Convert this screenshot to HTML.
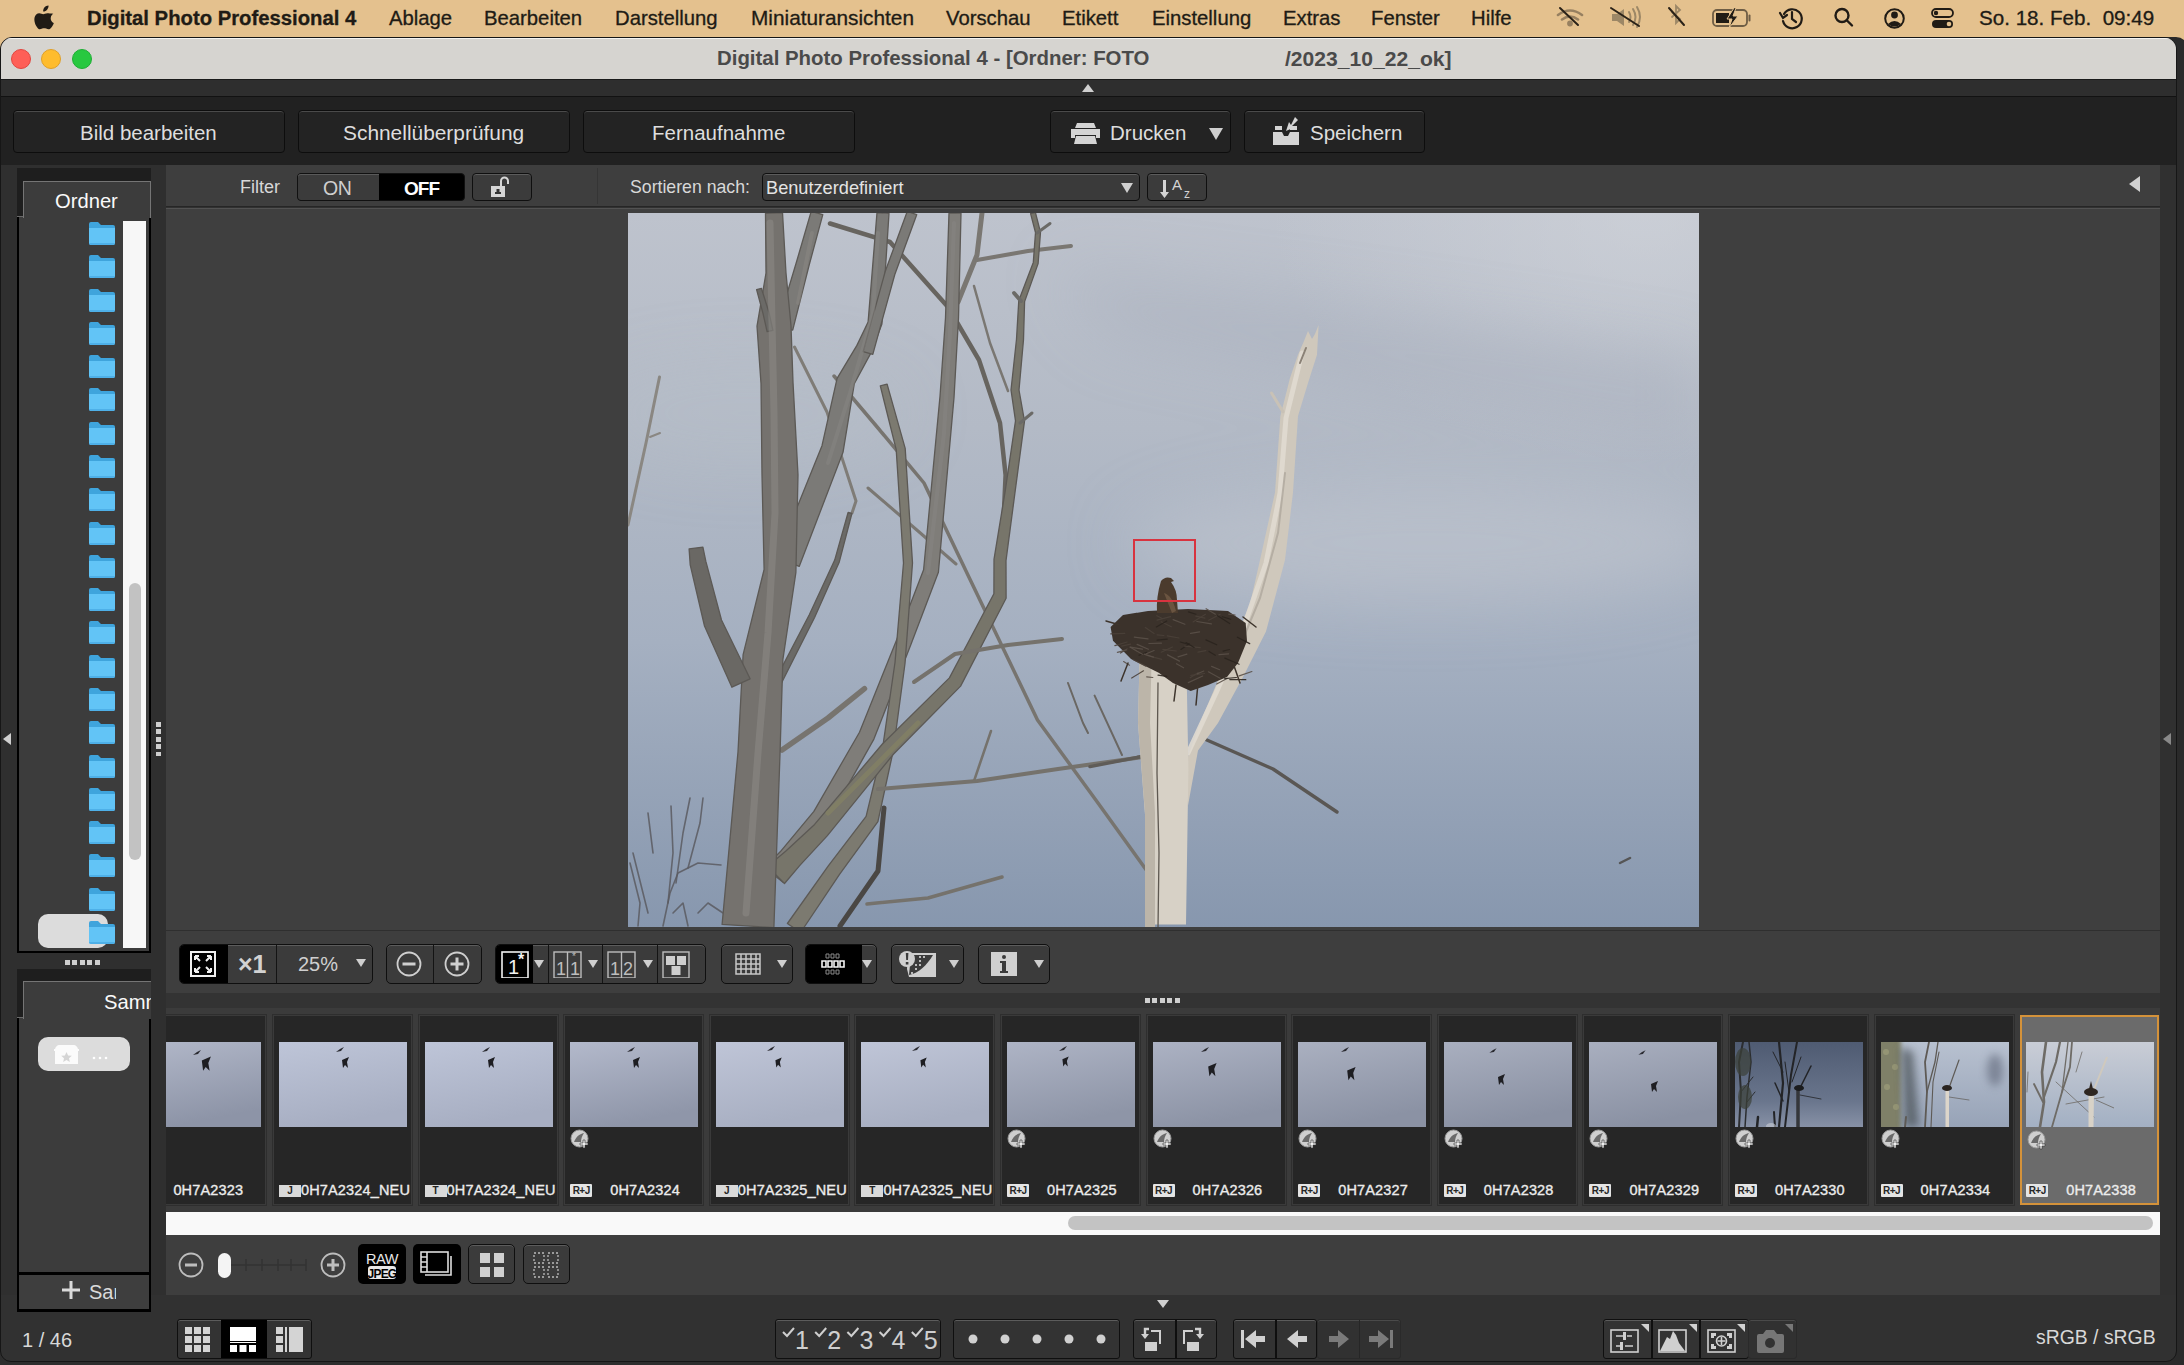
<!DOCTYPE html>
<html><head><meta charset="utf-8">
<style>
*{box-sizing:border-box;margin:0;padding:0}
html,body{width:2184px;height:1365px;overflow:hidden;background:#2e2e2e;font-family:"Liberation Sans",sans-serif;position:relative}
.a{position:absolute}
.t{position:absolute;white-space:nowrap;line-height:1}
.mi{position:absolute;top:8px;font-size:20.3px;color:#201b15;white-space:nowrap;line-height:1;-webkit-text-stroke:0.3px #201b15}
.btn{position:absolute;background:#232323;border:1px solid #0d0d0d;border-radius:4px;box-shadow:inset 0 1px 0 #4a4a4a;color:#dedede;font-size:20.5px;line-height:1;white-space:nowrap}
.tb{position:absolute;background:#3b3b3b;border:1px solid #0f0f0f;border-radius:5px;box-shadow:inset 0 1px 0 #5c5c5c;overflow:hidden}
.blk{position:absolute;top:0;bottom:0;background:#000}
.vs{position:absolute;top:0;bottom:0;width:1px;background:#141414}
.tri{position:absolute;width:0;height:0;border-left:6px solid transparent;border-right:6px solid transparent;border-top:9px solid #cfcfcf}
.folder{position:absolute;left:88px;width:28px;height:25px}
.thumb{position:absolute;top:1015px;width:139px;height:190px;background:#262626;border:1px solid #3a3a3a;box-shadow:0 0 0 1px #2e2e2e}
.thumb .ph{position:absolute;left:5px;top:26px;width:128px;height:85px;overflow:hidden}
.thumb .nm{position:absolute;top:167px;letter-spacing:0.15px;font-size:14.5px;color:#ececec;-webkit-text-stroke:0.35px #ececec;white-space:nowrap;line-height:1}
.badge{position:absolute;top:169px;left:5px;height:12px;background:#d9d9d9;color:#222;font-size:10px;font-weight:bold;line-height:12px;text-align:center}
.rj{position:absolute;top:168px;left:5px;width:22px;height:13px;background:#e4e4e4;border-radius:1px;color:#262626;font-size:10px;font-weight:bold;line-height:13px;text-align:center;letter-spacing:-0.5px}
.gl{position:absolute;top:113px;left:5px;width:20px;height:20px}
</style></head><body>
<!-- MENU BAR -->
<div class="a" style="left:0;top:0;width:2184px;height:38px;background:#e4c18e"></div>
<svg class="a" style="left:33px;top:5px" width="22" height="26" viewBox="0 0 22 26"><path fill="#201b15" d="M15.5 0.5c.2 1.6-.5 3.2-1.4 4.2-1 1.1-2.4 1.900-3.900 1.800-.2-1.600.5-3.200 1.400-4.200C12.600 1.200 14.200.4 15.500.5zM20.300 8.800c-.2.1-2.600 1.500-2.600 4.500 0 3.500 3.100 4.700 3.100 4.700s-1.100 4.300-4 5.900c-1.200.7-2.400.1-3.700-.4-1.300-.5-2.600-.5-3.900 0-1.300.5-2.400 1.100-3.600.4C3 21.900.8 17 1.500 12.800 2 10.200 4 8.300 6.300 8.300c1.600 0 2.700 1 3.900 1s2.200-1 4.200-1c.8 0 3.800.3 5.900.5z"/></svg>
<div class="mi" style="left:87px;font-weight:bold">Digital Photo Professional 4</div>
<div class="mi" style="left:389px">Ablage</div>
<div class="mi" style="left:484px">Bearbeiten</div>
<div class="mi" style="left:615px">Darstellung</div>
<div class="mi" style="left:751px;font-size:20.8px">Miniaturansichten</div>
<div class="mi" style="left:946px">Vorschau</div>
<div class="mi" style="left:1062px">Etikett</div>
<div class="mi" style="left:1152px">Einstellung</div>
<div class="mi" style="left:1283px">Extras</div>
<div class="mi" style="left:1371px">Fenster</div>
<div class="mi" style="left:1471px">Hilfe</div>
<div class="mi" style="left:1979px;font-size:20.6px">So. 18. Feb.&nbsp; 09:49</div>
<!-- status icons -->
<svg class="a" style="left:1540px;top:0" width="440" height="38" viewBox="1540 0 440 38" fill="none" stroke-linecap="round">
  <g stroke="#8f7a5c" stroke-width="2.6" opacity="0.9"><path d="M1558,15 q12,-9 24,0 M1562,19.5 q8,-6 16,0"/><circle cx="1570" cy="23.5" r="1.6" fill="#8f7a5c"/></g>
  <path d="M1560,8 L1578,25" stroke="#2a2218" stroke-width="2"/>
  <g fill="#9c8766" stroke="none"><path d="M1612,14 h5 l7,-5 v17 l-7,-5 h-5z"/></g><g stroke="#9c8766" stroke-width="2"><path d="M1629,12 q3,5 0,10 M1633,9 q5,8 0,16 M1637,7 q6,10 0,20"/></g>
  <path d="M1611,8 L1639,26" stroke="#2a2218" stroke-width="2"/>
  <path d="M1672,12 l8,7 -4,4 v-17 l4,4 -8,7" stroke="#9c8766" stroke-width="1.8"/>
  <path d="M1669,8 L1684,25" stroke="#2a2218" stroke-width="2"/>
  <rect x="1713" y="10" width="34" height="16" rx="4" stroke="#6e5d45" stroke-width="1.8"/><path d="M1749.5,15.5v5" stroke="#6e5d45" stroke-width="2"/>
  <path d="M1716,13 h13 v10 h-13z" fill="#201b15" stroke="none"/><path d="M1734,8 l-7,11 h5 l-3,9 9,-12 h-5 l3,-8z" fill="#201b15" stroke="#e4c18e" stroke-width="1"/>
  <g stroke="#201b15" stroke-width="2.2"><path d="M1783,21 a9.5,9.5 0 1 0 1,-7"/><path d="M1780,13 l3,5 4,-3" /><path d="M1792,12v7l4,3"/></g>
  <g stroke="#201b15" stroke-width="2.4"><circle cx="1842" cy="15.5" r="6.5"/><path d="M1847,20.5l5,5"/></g>
  <g stroke="#201b15" stroke-width="2"><circle cx="1894.5" cy="18.5" r="9.3"/></g><circle cx="1894.5" cy="15" r="3.4" fill="#201b15"/><path d="M1888,24 q6.5,-6 13,0 q-6.5,5 -13,0z" fill="#201b15"/>
  <rect x="1932" y="9" width="21" height="8" rx="4" stroke="#201b15" stroke-width="1.8"/><circle cx="1936" cy="13" r="2.2" fill="#201b15"/>
  <rect x="1932" y="20" width="21" height="8" rx="4" fill="#201b15"/><circle cx="1949" cy="24" r="2.3" fill="#e4c18e"/>
</svg>

<!-- WINDOW FRAME -->
<div class="a" style="left:0;top:36px;width:2184px;height:16px;background:#e4c18e"></div>
<div class="a" style="left:2070px;top:37px;width:118px;height:1400px;background:#2a2a2a;border-radius:12px"></div>
<div class="a" style="left:0;top:37px;width:2177px;height:1325px;background:#313131;border-radius:12px 12px 11px 11px;border:1px solid #161616;overflow:hidden">
  <div class="a" style="left:0;top:0;width:2176px;height:42px;background:#d6d4d0;border-top:1px solid #f4f3f1"></div>
</div>
<div class="a" style="left:11px;top:49px;width:20px;height:20px;border-radius:50%;background:#fe5f57;border:1px solid #e2463f"></div>
<div class="a" style="left:41px;top:49px;width:20px;height:20px;border-radius:50%;background:#febc2e;border:1px solid #e0a028"></div>
<div class="a" style="left:72px;top:49px;width:20px;height:20px;border-radius:50%;background:#28c840;border:1px solid #1eae34"></div>
<div class="t" style="left:717px;top:48px;font-size:20.4px;font-weight:bold;color:#4a4a4a">Digital Photo Professional 4 - [Ordner: FOTO</div>
<div class="t" style="left:1285px;top:48px;font-size:21.1px;font-weight:bold;color:#4a4a4a">/2023_10_22_ok]</div>
<!-- strip -->
<div class="a" style="left:1px;top:79px;width:2175px;height:18px;background:#2e2e2e;border-top:1px solid #1a1a1a;border-bottom:1px solid #121212"></div>
<div class="a" style="left:1082px;top:84px;width:0;height:0;border-left:6px solid transparent;border-right:6px solid transparent;border-bottom:8px solid #d0d0d0"></div>
<!-- toolbar -->
<div class="a" style="left:1px;top:97px;width:2175px;height:68px;background:#212121"></div>
<div class="btn" style="left:13px;top:110px;width:272px;height:43px"><span class="t" style="left:66px;top:12px">Bild bearbeiten</span></div>
<div class="btn" style="left:298px;top:110px;width:272px;height:43px"><span class="t" style="left:44px;top:12px;font-size:20.9px">Schnellüberprüfung</span></div>
<div class="btn" style="left:583px;top:110px;width:272px;height:43px"><span class="t" style="left:68px;top:12px">Fernaufnahme</span></div>
<div class="btn" style="left:1050px;top:110px;width:181px;height:43px">
  <svg class="a" style="left:20px;top:12px" width="29" height="21" viewBox="0 0 29 21"><path fill="#d4d4d4" d="M6 0h17l2 5H4z M0 6h29v9h-4v-3H4v3H0z M5 13h19l2 8H3z"/></svg>
  <span class="t" style="left:59px;top:12px">Drucken</span>
  <div class="tri" style="left:158px;top:17px;border-left-width:7.5px;border-right-width:7.5px;border-top-width:12px"></div>
</div>
<div class="btn" style="left:1244px;top:110px;width:181px;height:43px">
  <svg class="a" style="left:28px;top:6px" width="26" height="28" viewBox="0 0 26 28"><path fill="#d4d4d4" d="M0 15h9l2 4h4l2-4h9v13H0z M2 9h7v4H2z M17 9h7v4h-7z"/><path fill="#d4d4d4" d="M22 0l3 3-6 6 3 1-9 4 3-9 2 3z"/></svg>
  <span class="t" style="left:65px;top:12px">Speichern</span>
</div>
<!-- LEFT COLUMN -->
<div class="a" style="left:1px;top:165px;width:165px;height:1130px;background:#2f2f2f"></div>
<div class="a" style="left:3px;top:733px;width:0;height:0;border-top:6.5px solid transparent;border-bottom:6.5px solid transparent;border-right:8px solid #d0d0d0"></div>
<!-- Ordner panel -->
<div class="a" style="left:17px;top:168px;width:134px;height:13px;background:#1e1e1e"></div>
<div class="a" style="left:17px;top:181px;width:134px;height:772px;background:#000"></div>
<div class="a" style="left:19px;top:217px;width:130px;height:734px;background:#3c3c3c"></div>
<div class="a" style="left:17px;top:181px;width:6px;height:36px;background:#1e1e1e;border-bottom:1px solid #6a6a6a"></div>
<div class="a" style="left:23px;top:181px;width:128px;height:37px;background:#3c3c3c;border:1px solid #757575;border-bottom:none"></div>
<div class="t" style="left:55px;top:191px;font-size:20.2px;color:#fafafa">Ordner</div>
<div class="a" style="left:123px;top:221px;width:23px;height:727px;background:#f7f7f7"></div>
<div class="a" style="left:129px;top:583px;width:12px;height:277px;background:#c2c2c2;border-radius:6px"></div>
<div class="a" style="left:38px;top:914px;width:70px;height:34px;background:#dcdcdc;border-radius:10px"></div>
<svg class="folder" style="top:221.0px" viewBox="0 0 28 25"><path fill="#3fa4dc" d="M1 3a2 2 0 0 1 2-2h7l3 3h12a2 2 0 0 1 2 2v2H1z"/><path fill="#62c4f6" d="M1 7h26v15a2 2 0 0 1-2 2H3a2 2 0 0 1-2-2z"/><path fill="#4eb0e8" d="M1 22h26v0a2 2 0 0 1-2 2H3a2 2 0 0 1-2-2z"/></svg><svg class="folder" style="top:254.3px" viewBox="0 0 28 25"><path fill="#3fa4dc" d="M1 3a2 2 0 0 1 2-2h7l3 3h12a2 2 0 0 1 2 2v2H1z"/><path fill="#62c4f6" d="M1 7h26v15a2 2 0 0 1-2 2H3a2 2 0 0 1-2-2z"/><path fill="#4eb0e8" d="M1 22h26v0a2 2 0 0 1-2 2H3a2 2 0 0 1-2-2z"/></svg><svg class="folder" style="top:287.6px" viewBox="0 0 28 25"><path fill="#3fa4dc" d="M1 3a2 2 0 0 1 2-2h7l3 3h12a2 2 0 0 1 2 2v2H1z"/><path fill="#62c4f6" d="M1 7h26v15a2 2 0 0 1-2 2H3a2 2 0 0 1-2-2z"/><path fill="#4eb0e8" d="M1 22h26v0a2 2 0 0 1-2 2H3a2 2 0 0 1-2-2z"/></svg><svg class="folder" style="top:320.8px" viewBox="0 0 28 25"><path fill="#3fa4dc" d="M1 3a2 2 0 0 1 2-2h7l3 3h12a2 2 0 0 1 2 2v2H1z"/><path fill="#62c4f6" d="M1 7h26v15a2 2 0 0 1-2 2H3a2 2 0 0 1-2-2z"/><path fill="#4eb0e8" d="M1 22h26v0a2 2 0 0 1-2 2H3a2 2 0 0 1-2-2z"/></svg><svg class="folder" style="top:354.1px" viewBox="0 0 28 25"><path fill="#3fa4dc" d="M1 3a2 2 0 0 1 2-2h7l3 3h12a2 2 0 0 1 2 2v2H1z"/><path fill="#62c4f6" d="M1 7h26v15a2 2 0 0 1-2 2H3a2 2 0 0 1-2-2z"/><path fill="#4eb0e8" d="M1 22h26v0a2 2 0 0 1-2 2H3a2 2 0 0 1-2-2z"/></svg><svg class="folder" style="top:387.4px" viewBox="0 0 28 25"><path fill="#3fa4dc" d="M1 3a2 2 0 0 1 2-2h7l3 3h12a2 2 0 0 1 2 2v2H1z"/><path fill="#62c4f6" d="M1 7h26v15a2 2 0 0 1-2 2H3a2 2 0 0 1-2-2z"/><path fill="#4eb0e8" d="M1 22h26v0a2 2 0 0 1-2 2H3a2 2 0 0 1-2-2z"/></svg><svg class="folder" style="top:420.7px" viewBox="0 0 28 25"><path fill="#3fa4dc" d="M1 3a2 2 0 0 1 2-2h7l3 3h12a2 2 0 0 1 2 2v2H1z"/><path fill="#62c4f6" d="M1 7h26v15a2 2 0 0 1-2 2H3a2 2 0 0 1-2-2z"/><path fill="#4eb0e8" d="M1 22h26v0a2 2 0 0 1-2 2H3a2 2 0 0 1-2-2z"/></svg><svg class="folder" style="top:454.0px" viewBox="0 0 28 25"><path fill="#3fa4dc" d="M1 3a2 2 0 0 1 2-2h7l3 3h12a2 2 0 0 1 2 2v2H1z"/><path fill="#62c4f6" d="M1 7h26v15a2 2 0 0 1-2 2H3a2 2 0 0 1-2-2z"/><path fill="#4eb0e8" d="M1 22h26v0a2 2 0 0 1-2 2H3a2 2 0 0 1-2-2z"/></svg><svg class="folder" style="top:487.2px" viewBox="0 0 28 25"><path fill="#3fa4dc" d="M1 3a2 2 0 0 1 2-2h7l3 3h12a2 2 0 0 1 2 2v2H1z"/><path fill="#62c4f6" d="M1 7h26v15a2 2 0 0 1-2 2H3a2 2 0 0 1-2-2z"/><path fill="#4eb0e8" d="M1 22h26v0a2 2 0 0 1-2 2H3a2 2 0 0 1-2-2z"/></svg><svg class="folder" style="top:520.5px" viewBox="0 0 28 25"><path fill="#3fa4dc" d="M1 3a2 2 0 0 1 2-2h7l3 3h12a2 2 0 0 1 2 2v2H1z"/><path fill="#62c4f6" d="M1 7h26v15a2 2 0 0 1-2 2H3a2 2 0 0 1-2-2z"/><path fill="#4eb0e8" d="M1 22h26v0a2 2 0 0 1-2 2H3a2 2 0 0 1-2-2z"/></svg><svg class="folder" style="top:553.8px" viewBox="0 0 28 25"><path fill="#3fa4dc" d="M1 3a2 2 0 0 1 2-2h7l3 3h12a2 2 0 0 1 2 2v2H1z"/><path fill="#62c4f6" d="M1 7h26v15a2 2 0 0 1-2 2H3a2 2 0 0 1-2-2z"/><path fill="#4eb0e8" d="M1 22h26v0a2 2 0 0 1-2 2H3a2 2 0 0 1-2-2z"/></svg><svg class="folder" style="top:587.1px" viewBox="0 0 28 25"><path fill="#3fa4dc" d="M1 3a2 2 0 0 1 2-2h7l3 3h12a2 2 0 0 1 2 2v2H1z"/><path fill="#62c4f6" d="M1 7h26v15a2 2 0 0 1-2 2H3a2 2 0 0 1-2-2z"/><path fill="#4eb0e8" d="M1 22h26v0a2 2 0 0 1-2 2H3a2 2 0 0 1-2-2z"/></svg><svg class="folder" style="top:620.4px" viewBox="0 0 28 25"><path fill="#3fa4dc" d="M1 3a2 2 0 0 1 2-2h7l3 3h12a2 2 0 0 1 2 2v2H1z"/><path fill="#62c4f6" d="M1 7h26v15a2 2 0 0 1-2 2H3a2 2 0 0 1-2-2z"/><path fill="#4eb0e8" d="M1 22h26v0a2 2 0 0 1-2 2H3a2 2 0 0 1-2-2z"/></svg><svg class="folder" style="top:653.6px" viewBox="0 0 28 25"><path fill="#3fa4dc" d="M1 3a2 2 0 0 1 2-2h7l3 3h12a2 2 0 0 1 2 2v2H1z"/><path fill="#62c4f6" d="M1 7h26v15a2 2 0 0 1-2 2H3a2 2 0 0 1-2-2z"/><path fill="#4eb0e8" d="M1 22h26v0a2 2 0 0 1-2 2H3a2 2 0 0 1-2-2z"/></svg><svg class="folder" style="top:686.9px" viewBox="0 0 28 25"><path fill="#3fa4dc" d="M1 3a2 2 0 0 1 2-2h7l3 3h12a2 2 0 0 1 2 2v2H1z"/><path fill="#62c4f6" d="M1 7h26v15a2 2 0 0 1-2 2H3a2 2 0 0 1-2-2z"/><path fill="#4eb0e8" d="M1 22h26v0a2 2 0 0 1-2 2H3a2 2 0 0 1-2-2z"/></svg><svg class="folder" style="top:720.2px" viewBox="0 0 28 25"><path fill="#3fa4dc" d="M1 3a2 2 0 0 1 2-2h7l3 3h12a2 2 0 0 1 2 2v2H1z"/><path fill="#62c4f6" d="M1 7h26v15a2 2 0 0 1-2 2H3a2 2 0 0 1-2-2z"/><path fill="#4eb0e8" d="M1 22h26v0a2 2 0 0 1-2 2H3a2 2 0 0 1-2-2z"/></svg><svg class="folder" style="top:753.5px" viewBox="0 0 28 25"><path fill="#3fa4dc" d="M1 3a2 2 0 0 1 2-2h7l3 3h12a2 2 0 0 1 2 2v2H1z"/><path fill="#62c4f6" d="M1 7h26v15a2 2 0 0 1-2 2H3a2 2 0 0 1-2-2z"/><path fill="#4eb0e8" d="M1 22h26v0a2 2 0 0 1-2 2H3a2 2 0 0 1-2-2z"/></svg><svg class="folder" style="top:786.8px" viewBox="0 0 28 25"><path fill="#3fa4dc" d="M1 3a2 2 0 0 1 2-2h7l3 3h12a2 2 0 0 1 2 2v2H1z"/><path fill="#62c4f6" d="M1 7h26v15a2 2 0 0 1-2 2H3a2 2 0 0 1-2-2z"/><path fill="#4eb0e8" d="M1 22h26v0a2 2 0 0 1-2 2H3a2 2 0 0 1-2-2z"/></svg><svg class="folder" style="top:820.0px" viewBox="0 0 28 25"><path fill="#3fa4dc" d="M1 3a2 2 0 0 1 2-2h7l3 3h12a2 2 0 0 1 2 2v2H1z"/><path fill="#62c4f6" d="M1 7h26v15a2 2 0 0 1-2 2H3a2 2 0 0 1-2-2z"/><path fill="#4eb0e8" d="M1 22h26v0a2 2 0 0 1-2 2H3a2 2 0 0 1-2-2z"/></svg><svg class="folder" style="top:853.3px" viewBox="0 0 28 25"><path fill="#3fa4dc" d="M1 3a2 2 0 0 1 2-2h7l3 3h12a2 2 0 0 1 2 2v2H1z"/><path fill="#62c4f6" d="M1 7h26v15a2 2 0 0 1-2 2H3a2 2 0 0 1-2-2z"/><path fill="#4eb0e8" d="M1 22h26v0a2 2 0 0 1-2 2H3a2 2 0 0 1-2-2z"/></svg><svg class="folder" style="top:886.6px" viewBox="0 0 28 25"><path fill="#3fa4dc" d="M1 3a2 2 0 0 1 2-2h7l3 3h12a2 2 0 0 1 2 2v2H1z"/><path fill="#62c4f6" d="M1 7h26v15a2 2 0 0 1-2 2H3a2 2 0 0 1-2-2z"/><path fill="#4eb0e8" d="M1 22h26v0a2 2 0 0 1-2 2H3a2 2 0 0 1-2-2z"/></svg><svg class="folder" style="top:919.9px" viewBox="0 0 28 25"><path fill="#3fa4dc" d="M1 3a2 2 0 0 1 2-2h7l3 3h12a2 2 0 0 1 2 2v2H1z"/><path fill="#62c4f6" d="M1 7h26v15a2 2 0 0 1-2 2H3a2 2 0 0 1-2-2z"/><path fill="#4eb0e8" d="M1 22h26v0a2 2 0 0 1-2 2H3a2 2 0 0 1-2-2z"/></svg>
<div class="a" style="left:65px;top:960px;width:36px;height:5px;background:repeating-linear-gradient(90deg,#cfcfcf 0 5px,transparent 5px 7.5px)"></div>
<div class="a" style="left:156px;top:722px;width:5px;height:34px;background:repeating-linear-gradient(180deg,#cfcfcf 0 5px,transparent 5px 7.5px)"></div>
<!-- Sammlung panel -->
<div class="a" style="left:17px;top:969px;width:134px;height:12px;background:#1e1e1e"></div>
<div class="a" style="left:17px;top:981px;width:134px;height:331px;background:#000"></div>
<div class="a" style="left:19px;top:1018px;width:130px;height:254px;background:#3c3c3c"></div>
<div class="a" style="left:17px;top:981px;width:6px;height:37px;background:#1e1e1e;border-bottom:1px solid #6a6a6a"></div>
<div class="a" style="left:23px;top:981px;width:128px;height:38px;background:#3c3c3c;border-top:1px solid #757575;border-left:1px solid #757575"></div>
<div class="a" style="left:23px;top:982px;width:128px;height:36px;overflow:hidden"><span class="t" style="left:81px;top:10px;font-size:20.2px;color:#fafafa">Sammlung</span></div>
<div class="a" style="left:38px;top:1037px;width:92px;height:34px;background:#dcdcdc;border-radius:10px"></div>
<svg class="a" style="left:53px;top:1043px" width="80" height="22" viewBox="0 0 80 22"><path fill="#fbfbfb" d="M2 7c0-3 2-5 5-5h13c3 0 5 2 5 5v14H2z"/><path fill="#fbfbfb" d="M1 6h25v2H1z"/><path fill="#d5d5d5" d="M13.5 9l1.6 3.4 3.7.4-2.8 2.5.8 3.7-3.3-1.9-3.3 1.9.8-3.7-2.8-2.5 3.7-.4z"/><circle cx="41" cy="15" r="1.3" fill="#fff"/><circle cx="47" cy="15" r="1.3" fill="#fff"/><circle cx="53" cy="15" r="1.3" fill="#fff"/></svg>
<div class="a" style="left:19px;top:1275px;width:130px;height:34px;background:#3e3e3e"></div>
<svg class="a" style="left:62px;top:1281px" width="18" height="18" viewBox="0 0 18 18"><path fill="#dadada" d="M7.5 0h3v7.5H18v3h-7.5V18h-3v-7.5H0v-3h7.5z"/></svg>
<div class="a" style="left:89px;top:1281px;width:27px;height:26px;overflow:hidden"><span class="t" style="left:0;top:1px;font-size:20px;color:#dadada">Sam</span></div>

<!-- CONTENT AREA -->
<div class="a" style="left:166px;top:165px;width:1994px;height:42px;background:#3e3e3e;border-bottom:1px solid #262626"></div>
<div class="t" style="left:240px;top:178px;font-size:18px;color:#d8d8d8">Filter</div>
<div class="a" style="left:297px;top:173px;width:168px;height:28px;background:#000;border-radius:4px;border:1px solid #111"></div>
<div class="a" style="left:298px;top:174px;width:81px;height:26px;background:#3b3b3b;border-radius:3px 0 0 3px;box-shadow:inset 0 1px 0 #5a5a5a"></div>
<div class="t" style="left:323px;top:179px;font-size:19.5px;color:#cfcfcf;letter-spacing:-0.5px">ON</div>
<div class="t" style="left:404px;top:179px;font-size:19px;font-weight:bold;color:#fff;letter-spacing:-1px">OFF</div>
<div class="tb" style="left:472px;top:173px;width:60px;height:28px;border-radius:4px"></div>
<svg class="a" style="left:490px;top:176px" width="22" height="22" viewBox="0 0 22 22"><path fill="none" stroke="#d6d6d6" stroke-width="2" d="M11 10V5a3.5 3.5 0 0 1 7 0v3"/><rect x="1" y="10" width="14" height="11" fill="#d6d6d6"/><rect x="6.5" y="13" width="3" height="3" fill="#333"/><rect x="5" y="16" width="6" height="2" fill="#333"/></svg>
<div class="a" style="left:597px;top:168px;width:1px;height:36px;background:#353535"></div>
<div class="t" style="left:630px;top:179px;font-size:17.7px;color:#d8d8d8">Sortieren nach:</div>
<div class="tb" style="left:762px;top:173px;width:378px;height:28px;border-radius:4px;background:#3a3a3a"></div>
<div class="t" style="left:766px;top:179px;font-size:18.2px;color:#e4e4e4">Benutzerdefiniert</div>
<div class="tri" style="left:1121px;top:183px;border-left-width:6px;border-right-width:6px;border-top-width:10px"></div>
<div class="tb" style="left:1147px;top:173px;width:60px;height:28px;border-radius:4px"></div>
<svg class="a" style="left:1158px;top:176px" width="40" height="24" viewBox="0 0 40 24"><path fill="#d4d4d4" d="M5 4h3v12h3l-4.5 6L2 16h3z"/><text x="14" y="14" font-family="Liberation Sans" font-size="15" fill="#d4d4d4">A</text><text x="26" y="22" font-family="Liberation Sans" font-size="12" fill="#d4d4d4">z</text></svg>
<div class="a" style="left:2129px;top:176px;width:0;height:0;border-top:8.5px solid transparent;border-bottom:8.5px solid transparent;border-right:11px solid #d0d0d0"></div>
<!-- viewer -->
<div class="a" style="left:166px;top:208px;width:1994px;height:722px;background:#3f3f3f;border-top:1px solid #525252"></div>
<div id="photo" class="a" style="left:628px;top:213px;width:1071px;height:714px;overflow:hidden;background:#aab3c2"><svg width="1071" height="715" viewBox="0 0 1071 715" style="position:absolute;left:0;top:0">
<defs>
<linearGradient id="sky" x1="0" y1="0" x2="0" y2="1">
<stop offset="0" stop-color="#bec3cd"/><stop offset="0.3" stop-color="#b3bac6"/><stop offset="0.6" stop-color="#a5b0c1"/><stop offset="1" stop-color="#8797ae"/></linearGradient>
<radialGradient id="cl" cx="0.95" cy="0.0" r="0.35"><stop offset="0" stop-color="#d3d6dc" stop-opacity="0.6"/><stop offset="1" stop-color="#d3d6dc" stop-opacity="0"/></radialGradient>
</defs>
<rect width="1071" height="715" fill="url(#sky)"/>
<rect width="1071" height="715" fill="url(#cl)"/>
<filter id="soft" x="-50%" y="-50%" width="200%" height="200%"><feGaussianBlur stdDeviation="30"/></filter>
<g filter="url(#soft)">
<path d="M430,60 Q700,90 1071,150 L1071,230 Q800,190 480,120 Z" fill="#a9b1be" opacity="0.55"/>
<ellipse cx="800" cy="330" rx="300" ry="60" fill="#bfc5ce" opacity="0.6"/>
<ellipse cx="120" cy="200" rx="160" ry="50" fill="#b7bec9" opacity="0.4"/>
</g>
<path d="M35.0,713.0 L42.0,680.0 L50.0,660.0 L70.0,650.0 L93.0,652.0" fill="none" stroke="#5a5a60" stroke-width="1.6" stroke-linecap="round" stroke-linejoin="round" opacity="0.85"/>
<path d="M40.0,690.0 L45.0,640.0 L43.0,593.0" fill="none" stroke="#5a5a60" stroke-width="1.6" stroke-linecap="round" stroke-linejoin="round" opacity="0.85"/>
<path d="M48.0,670.0 L55.0,620.0 L62.0,585.0" fill="none" stroke="#5a5a60" stroke-width="1.6" stroke-linecap="round" stroke-linejoin="round" opacity="0.85"/>
<path d="M60.0,655.0 L72.0,610.0 L75.0,585.0" fill="none" stroke="#5a5a60" stroke-width="1.6" stroke-linecap="round" stroke-linejoin="round" opacity="0.85"/>
<path d="M20.0,700.0 L10.0,660.0 L5.0,640.0" fill="none" stroke="#5a5a60" stroke-width="1.6" stroke-linecap="round" stroke-linejoin="round" opacity="0.85"/>
<path d="M10.0,713.0 L12.0,690.0 L2.0,650.0" fill="none" stroke="#5a5a60" stroke-width="1.6" stroke-linecap="round" stroke-linejoin="round" opacity="0.85"/>
<path d="M25.0,640.0 L20.0,600.0" fill="none" stroke="#5a5a60" stroke-width="1.6" stroke-linecap="round" stroke-linejoin="round" opacity="0.85"/>
<path d="M70.0,700.0 L80.0,690.0 L95.0,700.0" fill="none" stroke="#5a5a60" stroke-width="1.6" stroke-linecap="round" stroke-linejoin="round" opacity="0.85"/>
<path d="M45.0,700.0 L55.0,690.0 L60.0,713.0" fill="none" stroke="#5a5a60" stroke-width="1.6" stroke-linecap="round" stroke-linejoin="round" opacity="0.85"/>
<path d="M31.5,164.0 L18.0,230.0 L0.0,312.0" fill="none" stroke="#8a8782" stroke-width="3" stroke-linecap="round" stroke-linejoin="round" opacity="1"/>
<path d="M22.0,224.0 L32.0,220.0" fill="none" stroke="#8a8782" stroke-width="2" stroke-linecap="round" stroke-linejoin="round" opacity="1"/>
<path d="M206.0,163.0 L250.0,215.0 L296.0,270.0 L338.0,358.0 L409.5,507.0 L470.0,590.0 L519.0,658.0" fill="none" stroke="#77746f" stroke-width="3.5" stroke-linecap="round" stroke-linejoin="round" opacity="1"/>
<path d="M240.0,275.0 L290.0,318.0 L328.0,351.0" fill="none" stroke="#7a7772" stroke-width="3" stroke-linecap="round" stroke-linejoin="round" opacity="1"/>
<path d="M166.5,134.0 L199.0,199.0 L228.0,288.0 L224.0,300.0" fill="none" stroke="#7f7c77" stroke-width="3" stroke-linecap="round" stroke-linejoin="round" opacity="1"/>
<path d="M149.1,478.6 L186.7,404.3 L211.3,348.9 L223.9,300.5 L220.1,299.5 L206.7,347.1 L181.3,401.7 L142.9,475.4Z" fill="#6b6a67" stroke="#5c5955" stroke-width="1.3" stroke-linejoin="round"/>
<path d="M154.0,537.0 L200.0,505.0 L236.5,475.7" fill="none" stroke="#77746f" stroke-width="5.5" stroke-linecap="round" stroke-linejoin="round" opacity="1"/>
<path d="M202.0,10.5 L262.0,29.0 L320.0,94.0 L351.0,147.0 L372.0,210.0 L377.6,262.0 L375.0,320.0" fill="none" stroke="#67645f" stroke-width="4.5" stroke-linecap="round" stroke-linejoin="round" opacity="1"/>
<path d="M330.0,89.0 L349.0,42.0 L354.0,0.0" fill="none" stroke="#7a7772" stroke-width="5" stroke-linecap="round" stroke-linejoin="round" opacity="1"/>
<path d="M349.0,47.0 L400.0,38.0 L443.0,33.0" fill="none" stroke="#7a7772" stroke-width="4" stroke-linecap="round" stroke-linejoin="round" opacity="1"/>
<path d="M346.0,73.0 L362.0,130.0 L380.0,178.0" fill="none" stroke="#7a7772" stroke-width="2.5" stroke-linecap="round" stroke-linejoin="round" opacity="1"/>
<path d="M321.0,-0.2 L317.5,104.7 L312.0,183.4 L295.6,356.7 L269.0,425.9 L231.5,519.3 L185.9,598.4 L152.2,638.8 L136.7,654.4 L155.3,669.6 L167.8,651.2 L200.1,607.6 L245.9,526.1 L283.0,431.3 L310.4,359.3 L326.0,184.6 L330.5,105.3 L333.0,0.2Z" fill="#7f7d79" stroke="#5c5955" stroke-width="1.3" stroke-linejoin="round"/>
<path d="M252.3,172.9 L268.2,236.6 L275.5,350.0 L267.0,449.5 L254.6,535.0 L238.1,603.4 L200.3,652.9 L159.4,710.5 L172.6,719.5 L211.7,661.1 L249.9,608.6 L265.4,537.0 L277.0,450.5 L284.5,350.0 L277.2,235.4 L259.1,171.1Z" fill="#7c7a70" stroke="#5c5955" stroke-width="1.3" stroke-linejoin="round"/>
<path d="M402.6,0.6 L407.5,19.5 L405.3,49.4 L390.8,87.4 L388.5,126.2 L383.0,177.0 L387.5,207.8 L377.1,278.7 L366.0,346.4 L365.9,380.8 L321.4,464.9 L254.4,531.0 L186.6,611.4 L157.9,637.9 L139.5,653.5 L156.5,670.5 L172.1,652.1 L199.4,622.6 L265.6,541.0 L332.6,473.1 L378.1,385.2 L378.0,347.6 L386.9,280.1 L396.5,208.2 L391.0,177.0 L395.5,126.8 L396.6,88.6 L410.1,50.6 L412.5,19.3 L407.4,-0.6Z" fill="#77756a" stroke="#5c5955" stroke-width="1.3" stroke-linejoin="round"/>
<path d="M409.0,20.0 L422.0,10.5" fill="none" stroke="#6b6a67" stroke-width="3" stroke-linecap="round" stroke-linejoin="round" opacity="1"/>
<path d="M392.0,210.0 L404.0,200.0" fill="none" stroke="#6b6a67" stroke-width="3" stroke-linecap="round" stroke-linejoin="round" opacity="1"/>
<path d="M393.0,88.0 L386.0,80.0" fill="none" stroke="#6b6a67" stroke-width="4" stroke-linecap="round" stroke-linejoin="round" opacity="1"/>
<path d="M171.2,353.4 L215.0,239.3 L226.3,170.7 L243.1,139.6 L253.9,111.0 L261.0,0.4 L249.0,-0.4 L240.1,109.0 L228.9,132.4 L209.1,165.3 L194.0,232.7 L148.8,344.6Z" fill="#7b7a77" stroke="#5c5955" stroke-width="1.3" stroke-linejoin="round"/>
<path d="M244.8,141.3 L266.8,61.5 L288.7,1.7 L279.3,-1.7 L257.2,58.5 L235.2,138.7Z" fill="#7b7a77" stroke="#5c5955" stroke-width="1.3" stroke-linejoin="round"/>
<path d="M164.7,117.1 L181.3,51.7 L194.8,1.6 L183.2,-1.6 L168.7,48.3 L149.3,112.9Z" fill="#7b7a77" stroke="#5c5955" stroke-width="1.3" stroke-linejoin="round"/>
<path d="M137.5,0.3 L138.0,60.0 L129.0,113.2 L133.0,170.6 L134.0,262.3 L136.1,356.5 L115.1,441.7 L110.0,538.8 L94.1,711.4 L145.9,714.6 L152.0,541.2 L154.9,446.3 L167.9,359.5 L170.0,261.7 L165.0,169.4 L163.0,112.8 L158.0,60.0 L154.5,-0.3Z" fill="#75726e" stroke="#5c5955" stroke-width="1.3" stroke-linejoin="round"/>
<path d="M128.6,76.7 L135.1,100.8 L139.1,118.7 L144.9,117.3 L140.9,99.2 L133.4,75.3Z" fill="#6b6a67" stroke="#5c5955" stroke-width="1.3" stroke-linejoin="round"/>
<path d="M142.0,10.0 L144.0,110.0 L146.0,200.0 L147.0,300.0 L140.0,420.0 L130.0,540.0 L118.0,700.0" fill="none" stroke="#8d8a86" stroke-width="7" stroke-linecap="round" stroke-linejoin="round" opacity="0.55"/>
<path d="M184.0,20.0 L170.0,90.0" fill="none" stroke="#8b8884" stroke-width="4" stroke-linecap="round" stroke-linejoin="round" opacity="0.5"/>
<path d="M250.0,20.0 L245.0,100.0 L222.0,180.0 L200.0,250.0" fill="none" stroke="#8a8884" stroke-width="4" stroke-linecap="round" stroke-linejoin="round" opacity="0.45"/>
<path d="M326.0,10.0 L322.0,120.0 L316.0,220.0 L300.0,360.0" fill="none" stroke="#8a8884" stroke-width="4" stroke-linecap="round" stroke-linejoin="round" opacity="0.45"/>
<path d="M200.0,600.0 L240.0,560.0 L290.0,510.0" fill="none" stroke="#8c8a60" stroke-width="5" stroke-linecap="round" stroke-linejoin="round" opacity="0.45"/>
<path d="M122.1,465.8 L93.5,407.0 L77.8,348.2 L74.9,334.1 L61.1,335.9 L62.2,351.8 L76.5,413.0 L103.9,474.2Z" fill="#6a6864" stroke="#5c5955" stroke-width="1.3" stroke-linejoin="round"/>
<path d="M250.0,576.0 L349.0,568.0 L430.0,556.0 L522.0,543.0" fill="none" stroke="#75726c" stroke-width="4" stroke-linecap="round" stroke-linejoin="round" opacity="1"/>
<path d="M346.0,568.0 L363.0,518.0" fill="none" stroke="#75726c" stroke-width="2.5" stroke-linecap="round" stroke-linejoin="round" opacity="1"/>
<path d="M286.0,469.0 L327.0,441.0 L380.0,432.0 L434.0,426.0" fill="none" stroke="#75726c" stroke-width="4" stroke-linecap="round" stroke-linejoin="round" opacity="1"/>
<path d="M239.0,691.0 L300.0,685.0 L374.0,664.0" fill="none" stroke="#75726c" stroke-width="3.5" stroke-linecap="round" stroke-linejoin="round" opacity="1"/>
<path d="M256.0,595.0 L250.0,658.0 L212.0,713.0" fill="none" stroke="#4a4744" stroke-width="5" stroke-linecap="round" stroke-linejoin="round" opacity="1"/>
<path d="M521.5,542.0 L462.0,553.6" fill="none" stroke="#5f5c58" stroke-width="3.5" stroke-linecap="round" stroke-linejoin="round" opacity="1"/>
<path d="M494.0,542.0 L466.6,482.6" fill="none" stroke="#6a6763" stroke-width="2" stroke-linecap="round" stroke-linejoin="round" opacity="1"/>
<path d="M572.0,524.0 L645.0,556.0 L709.0,599.0" fill="none" stroke="#5a5754" stroke-width="3.5" stroke-linecap="round" stroke-linejoin="round" opacity="1"/>
<path d="M440.0,470.0 L455.0,510.0 L460.0,520.0" fill="none" stroke="#6a6763" stroke-width="2" stroke-linecap="round" stroke-linejoin="round" opacity="1"/>
<path d="M555.5,556 L572,510 L599,446 L622,391 L632,347 L647,279.4 L652.4,203 L662,165 L670,141.7 L676,128 L680,118 L684,126 L687,121 L690.6,112 L689,141.7 L680,170 L670,203 L665,279.4 L657,347 L638,418.5 L615,464 L590,510 L570,537.6 L560,592.5Z" fill="#cfc8bc"/>
<path d="M560.0,540.0 L588.0,480.0 L612.0,425.0 L638.0,350.0 L652.0,280.0 L658.0,205.0 L674.0,140.0" fill="none" stroke="#e0dad0" stroke-width="5" stroke-linecap="round" stroke-linejoin="round" opacity="0.9"/>
<path d="M643.5,180.0 L655.0,198.8" fill="none" stroke="#c9c2b6" stroke-width="3" stroke-linecap="round" stroke-linejoin="round" opacity="1"/>
<path d="M672.0,150.0 L678.0,135.0" fill="none" stroke="#8a8176" stroke-width="2" stroke-linecap="round" stroke-linejoin="round" opacity="1"/>
<path d="M605.0,450.0 L632.0,385.0 L650.0,320.0 L657.0,260.0" fill="none" stroke="#aaa398" stroke-width="2" stroke-linecap="round" stroke-linejoin="round" opacity="0.7"/>
<path d="M512,427.7 L510,510 L517,601.7 L517,711.5 L558,711.5 L560.4,556 L558,427.7Z" fill="#d7d1c6"/>
<path d="M512.0,429.9 L510.0,510.1 L517.0,600.1 L517.0,715.0 L527.0,715.0 L527.0,599.9 L522.0,509.9 L524.0,430.1Z" fill="#bcb5a9" />
<path d="M530.0,470.0 L529.0,560.0 L531.0,640.0 L530.0,715.0" fill="none" stroke="#5e5850" stroke-width="1.3" stroke-linecap="round" stroke-linejoin="round" opacity="1"/>
<path d="M482.6,414 L495,402 L520,398 L560,396 L600,398 L617.7,410 L619,428 L610,450 L599,464 L580,472 L562.7,478 L545,470 L530.7,459.7 L503,446 L485,427.7Z" fill="#3b322b"/>
<path d="M514.4,436.1 L502.5,434.2" fill="none" stroke="#5a5048" stroke-width="1.2" stroke-linecap="round" stroke-linejoin="round" opacity="0.9"/>
<path d="M517.3,414.4 L526.1,420.4" fill="none" stroke="#4a4038" stroke-width="1.2" stroke-linecap="round" stroke-linejoin="round" opacity="0.9"/>
<path d="M568.9,408.5 L583.4,410.9" fill="none" stroke="#5a5048" stroke-width="1.2" stroke-linecap="round" stroke-linejoin="round" opacity="0.9"/>
<path d="M503.7,465.0 L515.5,457.8" fill="none" stroke="#4a4038" stroke-width="1.2" stroke-linecap="round" stroke-linejoin="round" opacity="0.9"/>
<path d="M562.9,462.4 L576.6,460.5" fill="none" stroke="#4a4038" stroke-width="1.2" stroke-linecap="round" stroke-linejoin="round" opacity="0.9"/>
<path d="M581.0,438.4 L587.3,442.3" fill="none" stroke="#2a231e" stroke-width="1.2" stroke-linecap="round" stroke-linejoin="round" opacity="0.9"/>
<path d="M486.9,432.6 L499.1,429.0" fill="none" stroke="#4a4038" stroke-width="1.2" stroke-linecap="round" stroke-linejoin="round" opacity="0.9"/>
<path d="M551.0,425.0 L539.3,422.9" fill="none" stroke="#4a4038" stroke-width="1.2" stroke-linecap="round" stroke-linejoin="round" opacity="0.9"/>
<path d="M574.7,463.0 L560.3,469.6" fill="none" stroke="#5a5048" stroke-width="1.2" stroke-linecap="round" stroke-linejoin="round" opacity="0.9"/>
<path d="M599.0,465.5 L588.7,471.0" fill="none" stroke="#5a5048" stroke-width="1.2" stroke-linecap="round" stroke-linejoin="round" opacity="0.9"/>
<path d="M595.1,438.1 L601.5,436.5" fill="none" stroke="#2a231e" stroke-width="1.2" stroke-linecap="round" stroke-linejoin="round" opacity="0.9"/>
<path d="M528.8,402.7 L534.3,405.5" fill="none" stroke="#4a4038" stroke-width="1.2" stroke-linecap="round" stroke-linejoin="round" opacity="0.9"/>
<path d="M600.7,401.1 L607.1,402.0" fill="none" stroke="#5a5048" stroke-width="1.2" stroke-linecap="round" stroke-linejoin="round" opacity="0.9"/>
<path d="M601.8,466.6 L617.8,466.7" fill="none" stroke="#2a231e" stroke-width="1.2" stroke-linecap="round" stroke-linejoin="round" opacity="0.9"/>
<path d="M492.5,440.0 L499.2,435.7" fill="none" stroke="#4a4038" stroke-width="1.2" stroke-linecap="round" stroke-linejoin="round" opacity="0.9"/>
<path d="M565.0,408.9 L577.5,401.3" fill="none" stroke="#4a4038" stroke-width="1.2" stroke-linecap="round" stroke-linejoin="round" opacity="0.9"/>
<path d="M533.4,430.2 L520.9,430.5" fill="none" stroke="#5a5048" stroke-width="1.2" stroke-linecap="round" stroke-linejoin="round" opacity="0.9"/>
<path d="M518.9,442.4 L533.7,446.3" fill="none" stroke="#4a4038" stroke-width="1.2" stroke-linecap="round" stroke-linejoin="round" opacity="0.9"/>
<path d="M552.9,436.4 L561.3,430.8" fill="none" stroke="#2a231e" stroke-width="1.2" stroke-linecap="round" stroke-linejoin="round" opacity="0.9"/>
<path d="M533.2,439.2 L544.4,434.0" fill="none" stroke="#4a4038" stroke-width="1.2" stroke-linecap="round" stroke-linejoin="round" opacity="0.9"/>
<path d="M530.0,462.2 L538.7,463.4" fill="none" stroke="#2a231e" stroke-width="1.2" stroke-linecap="round" stroke-linejoin="round" opacity="0.9"/>
<path d="M562.2,464.8 L570.3,459.6" fill="none" stroke="#4a4038" stroke-width="1.2" stroke-linecap="round" stroke-linejoin="round" opacity="0.9"/>
<path d="M562.6,420.4 L571.6,418.9" fill="none" stroke="#5a5048" stroke-width="1.2" stroke-linecap="round" stroke-linejoin="round" opacity="0.9"/>
<path d="M517.9,453.1 L505.4,446.7" fill="none" stroke="#4a4038" stroke-width="1.2" stroke-linecap="round" stroke-linejoin="round" opacity="0.9"/>
<path d="M550.0,443.8 L558.9,441.2" fill="none" stroke="#5a5048" stroke-width="1.2" stroke-linecap="round" stroke-linejoin="round" opacity="0.9"/>
<path d="M576.9,405.1 L567.8,403.1" fill="none" stroke="#4a4038" stroke-width="1.2" stroke-linecap="round" stroke-linejoin="round" opacity="0.9"/>
<path d="M592.1,465.2 L580.4,458.8" fill="none" stroke="#5a5048" stroke-width="1.2" stroke-linecap="round" stroke-linejoin="round" opacity="0.9"/>
<path d="M543.3,413.8 L533.2,408.8" fill="none" stroke="#4a4038" stroke-width="1.2" stroke-linecap="round" stroke-linejoin="round" opacity="0.9"/>
<path d="M591.7,456.7 L583.6,453.4" fill="none" stroke="#5a5048" stroke-width="1.2" stroke-linecap="round" stroke-linejoin="round" opacity="0.9"/>
<path d="M529.0,407.1 L542.5,403.6" fill="none" stroke="#4a4038" stroke-width="1.2" stroke-linecap="round" stroke-linejoin="round" opacity="0.9"/>
<path d="M529.1,427.2 L539.2,426.2" fill="none" stroke="#2a231e" stroke-width="1.2" stroke-linecap="round" stroke-linejoin="round" opacity="0.9"/>
<path d="M509.1,431.4 L520.4,436.2" fill="none" stroke="#5a5048" stroke-width="1.2" stroke-linecap="round" stroke-linejoin="round" opacity="0.9"/>
<path d="M611.2,462.9 L623.9,458.5" fill="none" stroke="#5a5048" stroke-width="1.2" stroke-linecap="round" stroke-linejoin="round" opacity="0.9"/>
<path d="M528.4,413.9 L538.7,408.0" fill="none" stroke="#2a231e" stroke-width="1.2" stroke-linecap="round" stroke-linejoin="round" opacity="0.9"/>
<path d="M592.2,401.2 L580.7,407.2" fill="none" stroke="#4a4038" stroke-width="1.2" stroke-linecap="round" stroke-linejoin="round" opacity="0.9"/>
<path d="M560.5,398.9 L567.9,401.2" fill="none" stroke="#2a231e" stroke-width="1.2" stroke-linecap="round" stroke-linejoin="round" opacity="0.9"/>
<path d="M572.2,434.7 L556.8,433.2" fill="none" stroke="#4a4038" stroke-width="1.2" stroke-linecap="round" stroke-linejoin="round" opacity="0.9"/>
<path d="M555.6,454.8 L548.5,450.7" fill="none" stroke="#5a5048" stroke-width="1.2" stroke-linecap="round" stroke-linejoin="round" opacity="0.9"/>
<path d="M602.7,406.3 L594.4,403.7" fill="none" stroke="#2a231e" stroke-width="1.2" stroke-linecap="round" stroke-linejoin="round" opacity="0.9"/>
<path d="M548.3,438.0 L534.8,436.3" fill="none" stroke="#4a4038" stroke-width="1.2" stroke-linecap="round" stroke-linejoin="round" opacity="0.9"/>
<path d="M566.1,434.4 L558.1,429.6" fill="none" stroke="#2a231e" stroke-width="1.2" stroke-linecap="round" stroke-linejoin="round" opacity="0.9"/>
<path d="M587.4,401.2 L578.1,395.7" fill="none" stroke="#5a5048" stroke-width="1.2" stroke-linecap="round" stroke-linejoin="round" opacity="0.9"/>
<path d="M493.7,433.1 L502.6,431.1" fill="none" stroke="#4a4038" stroke-width="1.2" stroke-linecap="round" stroke-linejoin="round" opacity="0.9"/>
<path d="M570.0,439.1 L577.8,437.7" fill="none" stroke="#4a4038" stroke-width="1.2" stroke-linecap="round" stroke-linejoin="round" opacity="0.9"/>
<path d="M498.8,436.9 L489.4,439.4" fill="none" stroke="#5a5048" stroke-width="1.2" stroke-linecap="round" stroke-linejoin="round" opacity="0.9"/>
<path d="M506.3,424.1 L520.0,425.9" fill="none" stroke="#5a5048" stroke-width="1.2" stroke-linecap="round" stroke-linejoin="round" opacity="0.9"/>
<path d="M591.0,441.6 L600.6,440.8" fill="none" stroke="#5a5048" stroke-width="1.2" stroke-linecap="round" stroke-linejoin="round" opacity="0.9"/>
<path d="M524.8,464.5 L518.7,463.9" fill="none" stroke="#5a5048" stroke-width="1.2" stroke-linecap="round" stroke-linejoin="round" opacity="0.9"/>
<path d="M518.7,439.3 L511.0,442.2" fill="none" stroke="#2a231e" stroke-width="1.2" stroke-linecap="round" stroke-linejoin="round" opacity="0.9"/>
<path d="M609.4,424.2 L621.7,430.6" fill="none" stroke="#2a231e" stroke-width="1.2" stroke-linecap="round" stroke-linejoin="round" opacity="0.9"/>
<path d="M545.1,406.6 L556.9,411.3" fill="none" stroke="#5a5048" stroke-width="1.2" stroke-linecap="round" stroke-linejoin="round" opacity="0.9"/>
<path d="M496.8,420.3 L482.7,420.8" fill="none" stroke="#4a4038" stroke-width="1.2" stroke-linecap="round" stroke-linejoin="round" opacity="0.9"/>
<path d="M501.5,452.2 L495.6,448.6" fill="none" stroke="#5a5048" stroke-width="1.2" stroke-linecap="round" stroke-linejoin="round" opacity="0.9"/>
<path d="M601.7,410.5 L589.6,402.7" fill="none" stroke="#2a231e" stroke-width="1.2" stroke-linecap="round" stroke-linejoin="round" opacity="0.9"/>
<path d="M596.8,445.1 L611.1,451.2" fill="none" stroke="#2a231e" stroke-width="1.2" stroke-linecap="round" stroke-linejoin="round" opacity="0.9"/>
<path d="M551.5,448.1 L539.5,441.9" fill="none" stroke="#5a5048" stroke-width="1.2" stroke-linecap="round" stroke-linejoin="round" opacity="0.9"/>
<path d="M526.1,437.5 L518.3,440.7" fill="none" stroke="#5a5048" stroke-width="1.2" stroke-linecap="round" stroke-linejoin="round" opacity="0.9"/>
<path d="M516.0,441.1 L525.5,444.1" fill="none" stroke="#5a5048" stroke-width="1.2" stroke-linecap="round" stroke-linejoin="round" opacity="0.9"/>
<path d="M535.9,422.5 L529.1,421.9" fill="none" stroke="#4a4038" stroke-width="1.2" stroke-linecap="round" stroke-linejoin="round" opacity="0.9"/>
<path d="M596.7,465.7 L608.4,464.5" fill="none" stroke="#2a231e" stroke-width="1.2" stroke-linecap="round" stroke-linejoin="round" opacity="0.9"/>
<path d="M569.4,460.8 L575.8,458.0" fill="none" stroke="#5a5048" stroke-width="1.2" stroke-linecap="round" stroke-linejoin="round" opacity="0.9"/>
<path d="M552.3,429.0 L559.9,431.1" fill="none" stroke="#2a231e" stroke-width="1.2" stroke-linecap="round" stroke-linejoin="round" opacity="0.9"/>
<path d="M501.9,434.1 L514.5,441.3" fill="none" stroke="#5a5048" stroke-width="1.2" stroke-linecap="round" stroke-linejoin="round" opacity="0.9"/>
<path d="M577.9,426.9 L588.7,431.8" fill="none" stroke="#2a231e" stroke-width="1.2" stroke-linecap="round" stroke-linejoin="round" opacity="0.9"/>
<path d="M478.0,408.0 L492.0,412.0" fill="none" stroke="#3d342c" stroke-width="1.5" stroke-linecap="round" stroke-linejoin="round" opacity="1"/>
<path d="M615.0,404.0 L628.0,414.0" fill="none" stroke="#3d342c" stroke-width="1.5" stroke-linecap="round" stroke-linejoin="round" opacity="1"/>
<path d="M500.0,450.0 L493.0,468.0" fill="none" stroke="#3d342c" stroke-width="1.5" stroke-linecap="round" stroke-linejoin="round" opacity="1"/>
<path d="M605.0,450.0 L612.0,470.0" fill="none" stroke="#3d342c" stroke-width="1.5" stroke-linecap="round" stroke-linejoin="round" opacity="1"/>
<path d="M570.0,470.0 L568.0,492.0" fill="none" stroke="#3d342c" stroke-width="1.5" stroke-linecap="round" stroke-linejoin="round" opacity="1"/>
<path d="M548.0,472.0 L546.0,488.0" fill="none" stroke="#3d342c" stroke-width="1.5" stroke-linecap="round" stroke-linejoin="round" opacity="1"/>
<path d="M533,368 q4,-5 10,-3 l3,3 -3,1 q6,8 6,18 l1,13 h-21 q-1,-16 4,-32 z" fill="#4b3b2d"/>
<path d="M536,380 q8,2 12,18 l-4,2 q-4,-10 -8,-20z" fill="#6a5440"/>
<rect x="506" y="327" width="61" height="61" fill="none" stroke="#d8333f" stroke-width="2"/>
<path d="M992.0,650.0 L1002.0,645.0" fill="none" stroke="#555" stroke-width="2.5" stroke-linecap="round" stroke-linejoin="round" opacity="1"/>
</svg></div>
<!-- right strip -->
<div class="a" style="left:2160px;top:165px;width:16px;height:1130px;background:#303030"></div>
<div class="a" style="left:2163px;top:733px;width:0;height:0;border-top:6.5px solid transparent;border-bottom:6.5px solid transparent;border-right:8px solid #888"></div>
<!-- zoom toolbar -->
<div class="a" style="left:166px;top:930px;width:1994px;height:63px;background:#3e3e3e;border-top:1px solid #2f2f2f"></div>
<!-- toolbar group 1 -->
<div class="tb" style="left:179px;top:944px;width:194px;height:40px">
  <div class="blk" style="left:0;width:48px"></div>
  <div class="vs" style="left:96px"></div>
</div>
<svg class="a" style="left:190px;top:951px" width="26" height="26" viewBox="0 0 26 26"><rect x="1" y="1" width="24" height="24" fill="none" stroke="#f0f0f0" stroke-width="2"/><path fill="none" stroke="#f0f0f0" stroke-width="2" d="M5 5l5 5M5 5h4M5 5v4M21 5l-5 5M21 5h-4M21 5v4M5 21l5-5M5 21h4M5 21v-4M21 21l-5-5M21 21h-4M21 21v-4"/></svg>
<div class="t" style="left:238px;top:952px;font-size:25px;font-weight:bold;color:#d2d2d2">×1</div>
<div class="t" style="left:298px;top:954px;font-size:20px;color:#cfcfcf">25%</div>
<div class="tri" style="left:356px;top:959px;border-left-width:5.5px;border-right-width:5.5px;border-top-width:8px"></div>
<!-- group 2 -->
<div class="tb" style="left:386px;top:944px;width:96px;height:40px"><div class="vs" style="left:46px"></div></div>
<svg class="a" style="left:395px;top:951px" width="80" height="26" viewBox="0 0 80 26"><g fill="none" stroke="#cfcfcf" stroke-width="1.8"><circle cx="14" cy="13" r="11.5"/><circle cx="62" cy="13" r="11.5"/></g><path fill="#cfcfcf" d="M7.5 11.5h13v3h-13z M55.5 11.5h13v3h-13z M60.5 6.5h3v13h-3z"/></svg>
<!-- group 3 -->
<div class="tb" style="left:495px;top:944px;width:211px;height:40px">
  <div class="blk" style="left:0;width:37px"></div>
  <div class="vs" style="left:52px"></div><div class="vs" style="left:106px"></div><div class="vs" style="left:161px"></div>
</div>
<svg class="a" style="left:500px;top:950px" width="200" height="28" viewBox="0 0 200 28">
  <g fill="none" stroke="#f2f2f2" stroke-width="1.6"><rect x="2" y="2" width="26" height="26"/></g>
  <text x="8" y="24" font-family="Liberation Sans" font-size="20" fill="#f2f2f2">1</text>
  <text x="18" y="15" font-family="Liberation Sans" font-size="16" font-weight="bold" fill="#f2f2f2">*</text>
  <g fill="none" stroke="#bdbdbd" stroke-width="1.4"><rect x="54" y="2" width="27" height="26"/><path d="M67.5 2v26"/><rect x="108" y="2" width="27" height="26"/><path d="M121.5 2v26"/><rect x="163" y="2" width="26" height="26"/></g>
  <text x="56" y="25" font-family="Liberation Sans" font-size="18" fill="#bdbdbd">1</text><text x="70" y="25" font-family="Liberation Sans" font-size="18" fill="#bdbdbd">1</text>
  <text x="72" y="10" font-family="Liberation Sans" font-size="10" fill="#bdbdbd">*</text>
  <text x="110" y="25" font-family="Liberation Sans" font-size="18" fill="#bdbdbd">1</text><text x="123" y="25" font-family="Liberation Sans" font-size="18" fill="#bdbdbd">2</text>
  <path fill="#cfcfcf" d="M166 6h9v9h-9z M177 6h9v9h-9z M171.5 16h9v9h-9z"/>
</svg>
<div class="tri" style="left:534px;top:960px;border-left-width:5px;border-right-width:5px;border-top-width:8px"></div>
<div class="tri" style="left:588px;top:960px;border-left-width:5px;border-right-width:5px;border-top-width:8px"></div>
<div class="tri" style="left:643px;top:960px;border-left-width:5px;border-right-width:5px;border-top-width:8px"></div>
<!-- group 4 grid -->
<div class="tb" style="left:721px;top:944px;width:72px;height:40px"></div>
<svg class="a" style="left:735px;top:953px" width="26" height="22" viewBox="0 0 26 22"><g fill="none" stroke="#c8c8c8" stroke-width="1.5"><rect x="1" y="1" width="24" height="20"/><path d="M1 6h24M1 11h24M1 16h24M6 1v20M11 1v20M16 1v20M21 1v20"/></g></svg>
<div class="tri" style="left:777px;top:960px;border-left-width:5px;border-right-width:5px;border-top-width:8px"></div>
<!-- group 5 -->
<div class="tb" style="left:805px;top:944px;width:72px;height:40px"><div class="blk" style="left:0;width:56px"></div></div>
<svg class="a" style="left:821px;top:953px" width="24" height="22" viewBox="0 0 24 22"><g fill="none" stroke="#8a8a8a" stroke-width="1"><path d="M5 1h3v4H5zM10 1h3v4h-3zM15 1h3v4h-3zM5 17h3v4H5zM10 17h3v4h-3zM15 17h3v4h-3z"/></g><g fill="none" stroke="#f5f5f5" stroke-width="1.6"><path d="M1 8h4v6H1zM7 8h4v6H7zM13 8h4v6h-4zM19 8h4v6h-4z"/></g></svg>
<div class="tri" style="left:862px;top:960px;border-left-width:5px;border-right-width:5px;border-top-width:8px"></div>
<!-- group 6 -->
<div class="tb" style="left:891px;top:944px;width:73px;height:40px"></div>
<svg class="a" style="left:899px;top:950px" width="42" height="28" viewBox="0 0 42 28"><path fill="#cfcfcf" d="M9 3h28v24H10l-2-8z"/><path fill="#3b3b3b" d="M10 25c10-2 18-10 24-20H12l-2 20z"/><g fill="#bbb"><rect x="20" y="6" width="2" height="2"/><rect x="24" y="6" width="2" height="2"/><rect x="20" y="10" width="2" height="2"/><rect x="16" y="14" width="2" height="2"/><rect x="20" y="14" width="2" height="2"/><rect x="16" y="18" width="2" height="2"/><rect x="12" y="22" width="2" height="2"/></g><circle cx="8" cy="9" r="8" fill="#cfcfcf"/><path fill="#3b3b3b" d="M6.8 3h2.6l-.4 7H7.2z M6.8 12h2.6v2.4H6.8z"/></svg>
<div class="tri" style="left:949px;top:960px;border-left-width:5px;border-right-width:5px;border-top-width:8px"></div>
<!-- group 7 -->
<div class="tb" style="left:978px;top:944px;width:72px;height:40px"></div>
<svg class="a" style="left:991px;top:952px" width="26" height="24" viewBox="0 0 26 24"><rect x="0" y="0" width="26" height="24" fill="#d0d0d0"/><circle cx="13" cy="5" r="2" fill="#3a3a3a"/><path fill="#3a3a3a" d="M9 9h6v10h2v2H9v-2h2v-8H9z"/></svg>
<div class="tri" style="left:1034px;top:960px;border-left-width:5px;border-right-width:5px;border-top-width:8px"></div>
<!-- strip -->
<div class="a" style="left:166px;top:993px;width:1994px;height:15px;background:#333"></div>
<div class="a" style="left:1145px;top:998px;width:36px;height:5px;background:repeating-linear-gradient(90deg,#cfcfcf 0 5px,transparent 5px 7.5px)"></div>
<!-- filmstrip -->
<div class="a" style="left:166px;top:1008px;width:1994px;height:204px;background:#3b3b3b;overflow:hidden"><div class="a" style="left:-166px;top:-1008px;width:2184px;height:1365px"><div class="thumb" style="left:127.4px"><div class="ph" style=""><svg width="128" height="85" viewBox="0 0 128 85"><defs><linearGradient id="g0" x1="0" y1="0" x2="0.3" y2="1"><stop offset="0" stop-color="#b2b8c9"/><stop offset="1" stop-color="#8d94a7"/></linearGradient></defs><rect width="128" height="85" fill="url(#g0)"/><path transform="translate(64,11) scale(1)" d="M-4,2 L0,-1 L4,-3 L1,1 Z" fill="#2a2a30"/><path transform="translate(74,21) scale(1.3)" d="M-4,-2 L3,-5 L1,0 L2,6 L-1,3 L-3,6 Z" fill="#1e1e22"/></svg></div><svg class="gl" viewBox="0 0 20 20"><circle cx="9.5" cy="9.5" r="8.5" fill="#cfcfcf" stroke="#9a9a9a" stroke-width="1"/><path d="M4 13c2-5 5-8 10-9-2 3-3 6-3 9z" fill="#6a6a6a"/><path d="M13 11h2v3h3v2h-3v3h-2v-3h-3v-2h3z" fill="#f0f0f0" stroke="#333" stroke-width="0.6"/></svg><div class="rj" style="">R+J</div><div class="nm" style="left:45px;">0H7A2323</div></div>
<div class="thumb" style="left:273.0px"><div class="ph" style=""><svg width="128" height="85" viewBox="0 0 128 85"><defs><linearGradient id="g1" x1="0" y1="0" x2="0.3" y2="1"><stop offset="0" stop-color="#bec5d8"/><stop offset="1" stop-color="#a7aec2"/></linearGradient></defs><rect width="128" height="85" fill="url(#g1)"/><path transform="translate(61,8) scale(1)" d="M-4,2 L0,-1 L4,-3 L1,1 Z" fill="#2a2a30"/><path transform="translate(67,20) scale(1)" d="M-4,-2 L3,-5 L1,0 L2,6 L-1,3 L-3,6 Z" fill="#1e1e22"/></svg></div><div class="badge" style="width:22px">J</div><div class="nm" style="left:27px">0H7A2324_NEU</div></div>
<div class="thumb" style="left:418.6px"><div class="ph" style=""><svg width="128" height="85" viewBox="0 0 128 85"><defs><linearGradient id="g2" x1="0" y1="0" x2="0.3" y2="1"><stop offset="0" stop-color="#bec5d8"/><stop offset="1" stop-color="#a7aec2"/></linearGradient></defs><rect width="128" height="85" fill="url(#g2)"/><path transform="translate(61,8) scale(1)" d="M-4,2 L0,-1 L4,-3 L1,1 Z" fill="#2a2a30"/><path transform="translate(67,20) scale(1)" d="M-4,-2 L3,-5 L1,0 L2,6 L-1,3 L-3,6 Z" fill="#1e1e22"/></svg></div><div class="badge" style="width:22px">T</div><div class="nm" style="left:27px">0H7A2324_NEU</div></div>
<div class="thumb" style="left:564.2px"><div class="ph" style=""><svg width="128" height="85" viewBox="0 0 128 85"><defs><linearGradient id="g3" x1="0" y1="0" x2="0.3" y2="1"><stop offset="0" stop-color="#b3b9cb"/><stop offset="1" stop-color="#8f96a9"/></linearGradient></defs><rect width="128" height="85" fill="url(#g3)"/><path transform="translate(61,8) scale(1)" d="M-4,2 L0,-1 L4,-3 L1,1 Z" fill="#2a2a30"/><path transform="translate(67,20) scale(1)" d="M-4,-2 L3,-5 L1,0 L2,6 L-1,3 L-3,6 Z" fill="#1e1e22"/></svg></div><svg class="gl" viewBox="0 0 20 20"><circle cx="9.5" cy="9.5" r="8.5" fill="#cfcfcf" stroke="#9a9a9a" stroke-width="1"/><path d="M4 13c2-5 5-8 10-9-2 3-3 6-3 9z" fill="#6a6a6a"/><path d="M13 11h2v3h3v2h-3v3h-2v-3h-3v-2h3z" fill="#f0f0f0" stroke="#333" stroke-width="0.6"/></svg><div class="rj" style="">R+J</div><div class="nm" style="left:45px;">0H7A2324</div></div>
<div class="thumb" style="left:709.8px"><div class="ph" style=""><svg width="128" height="85" viewBox="0 0 128 85"><defs><linearGradient id="g4" x1="0" y1="0" x2="0.3" y2="1"><stop offset="0" stop-color="#bfc5d7"/><stop offset="1" stop-color="#a8afc2"/></linearGradient></defs><rect width="128" height="85" fill="url(#g4)"/><path transform="translate(55,7) scale(1)" d="M-4,2 L0,-1 L4,-3 L1,1 Z" fill="#2a2a30"/><path transform="translate(63,20) scale(0.9)" d="M-4,-2 L3,-5 L1,0 L2,6 L-1,3 L-3,6 Z" fill="#1e1e22"/></svg></div><div class="badge" style="width:22px">J</div><div class="nm" style="left:27px">0H7A2325_NEU</div></div>
<div class="thumb" style="left:855.4px"><div class="ph" style=""><svg width="128" height="85" viewBox="0 0 128 85"><defs><linearGradient id="g5" x1="0" y1="0" x2="0.3" y2="1"><stop offset="0" stop-color="#bfc5d7"/><stop offset="1" stop-color="#a8afc2"/></linearGradient></defs><rect width="128" height="85" fill="url(#g5)"/><path transform="translate(55,7) scale(1)" d="M-4,2 L0,-1 L4,-3 L1,1 Z" fill="#2a2a30"/><path transform="translate(63,20) scale(0.9)" d="M-4,-2 L3,-5 L1,0 L2,6 L-1,3 L-3,6 Z" fill="#1e1e22"/></svg></div><div class="badge" style="width:22px">T</div><div class="nm" style="left:27px">0H7A2325_NEU</div></div>
<div class="thumb" style="left:1001.0px"><div class="ph" style=""><svg width="128" height="85" viewBox="0 0 128 85"><defs><linearGradient id="g6" x1="0" y1="0" x2="0.3" y2="1"><stop offset="0" stop-color="#aeb4c5"/><stop offset="1" stop-color="#8e95a7"/></linearGradient></defs><rect width="128" height="85" fill="url(#g6)"/><path transform="translate(56,7) scale(1)" d="M-4,2 L0,-1 L4,-3 L1,1 Z" fill="#2a2a30"/><path transform="translate(59,19) scale(0.9)" d="M-4,-2 L3,-5 L1,0 L2,6 L-1,3 L-3,6 Z" fill="#1e1e22"/></svg></div><svg class="gl" viewBox="0 0 20 20"><circle cx="9.5" cy="9.5" r="8.5" fill="#cfcfcf" stroke="#9a9a9a" stroke-width="1"/><path d="M4 13c2-5 5-8 10-9-2 3-3 6-3 9z" fill="#6a6a6a"/><path d="M13 11h2v3h3v2h-3v3h-2v-3h-3v-2h3z" fill="#f0f0f0" stroke="#333" stroke-width="0.6"/></svg><div class="rj" style="">R+J</div><div class="nm" style="left:45px;">0H7A2325</div></div>
<div class="thumb" style="left:1146.6px"><div class="ph" style=""><svg width="128" height="85" viewBox="0 0 128 85"><defs><linearGradient id="g7" x1="0" y1="0" x2="0.3" y2="1"><stop offset="0" stop-color="#acb2c3"/><stop offset="1" stop-color="#8c93a5"/></linearGradient></defs><rect width="128" height="85" fill="url(#g7)"/><path transform="translate(52,8) scale(1)" d="M-4,2 L0,-1 L4,-3 L1,1 Z" fill="#2a2a30"/><path transform="translate(60,27) scale(1.2)" d="M-4,-2 L3,-5 L1,0 L2,6 L-1,3 L-3,6 Z" fill="#1e1e22"/></svg></div><svg class="gl" viewBox="0 0 20 20"><circle cx="9.5" cy="9.5" r="8.5" fill="#cfcfcf" stroke="#9a9a9a" stroke-width="1"/><path d="M4 13c2-5 5-8 10-9-2 3-3 6-3 9z" fill="#6a6a6a"/><path d="M13 11h2v3h3v2h-3v3h-2v-3h-3v-2h3z" fill="#f0f0f0" stroke="#333" stroke-width="0.6"/></svg><div class="rj" style="">R+J</div><div class="nm" style="left:45px;">0H7A2326</div></div>
<div class="thumb" style="left:1292.2px"><div class="ph" style=""><svg width="128" height="85" viewBox="0 0 128 85"><defs><linearGradient id="g8" x1="0" y1="0" x2="0.3" y2="1"><stop offset="0" stop-color="#aab0c0"/><stop offset="1" stop-color="#8b92a4"/></linearGradient></defs><rect width="128" height="85" fill="url(#g8)"/><path transform="translate(47,8) scale(1)" d="M-4,2 L0,-1 L4,-3 L1,1 Z" fill="#2a2a30"/><path transform="translate(54,31) scale(1.2)" d="M-4,-2 L3,-5 L1,0 L2,6 L-1,3 L-3,6 Z" fill="#1e1e22"/></svg></div><svg class="gl" viewBox="0 0 20 20"><circle cx="9.5" cy="9.5" r="8.5" fill="#cfcfcf" stroke="#9a9a9a" stroke-width="1"/><path d="M4 13c2-5 5-8 10-9-2 3-3 6-3 9z" fill="#6a6a6a"/><path d="M13 11h2v3h3v2h-3v3h-2v-3h-3v-2h3z" fill="#f0f0f0" stroke="#333" stroke-width="0.6"/></svg><div class="rj" style="">R+J</div><div class="nm" style="left:45px;">0H7A2327</div></div>
<div class="thumb" style="left:1437.8px"><div class="ph" style=""><svg width="128" height="85" viewBox="0 0 128 85"><defs><linearGradient id="g9" x1="0" y1="0" x2="0.3" y2="1"><stop offset="0" stop-color="#a9afbf"/><stop offset="1" stop-color="#8a91a3"/></linearGradient></defs><rect width="128" height="85" fill="url(#g9)"/><path transform="translate(49,9) scale(0.9)" d="M-4,2 L0,-1 L4,-3 L1,1 Z" fill="#2a2a30"/><path transform="translate(58,37) scale(1)" d="M-4,-2 L3,-5 L1,0 L2,6 L-1,3 L-3,6 Z" fill="#1e1e22"/></svg></div><svg class="gl" viewBox="0 0 20 20"><circle cx="9.5" cy="9.5" r="8.5" fill="#cfcfcf" stroke="#9a9a9a" stroke-width="1"/><path d="M4 13c2-5 5-8 10-9-2 3-3 6-3 9z" fill="#6a6a6a"/><path d="M13 11h2v3h3v2h-3v3h-2v-3h-3v-2h3z" fill="#f0f0f0" stroke="#333" stroke-width="0.6"/></svg><div class="rj" style="">R+J</div><div class="nm" style="left:45px;">0H7A2328</div></div>
<div class="thumb" style="left:1583.4px"><div class="ph" style=""><svg width="128" height="85" viewBox="0 0 128 85"><defs><linearGradient id="g10" x1="0" y1="0" x2="0.3" y2="1"><stop offset="0" stop-color="#a9afbf"/><stop offset="1" stop-color="#8a91a3"/></linearGradient></defs><rect width="128" height="85" fill="url(#g10)"/><path transform="translate(53,11) scale(0.9)" d="M-4,2 L0,-1 L4,-3 L1,1 Z" fill="#2a2a30"/><path transform="translate(66,44) scale(1)" d="M-4,-2 L3,-5 L1,0 L2,6 L-1,3 L-3,6 Z" fill="#1e1e22"/></svg></div><svg class="gl" viewBox="0 0 20 20"><circle cx="9.5" cy="9.5" r="8.5" fill="#cfcfcf" stroke="#9a9a9a" stroke-width="1"/><path d="M4 13c2-5 5-8 10-9-2 3-3 6-3 9z" fill="#6a6a6a"/><path d="M13 11h2v3h3v2h-3v3h-2v-3h-3v-2h3z" fill="#f0f0f0" stroke="#333" stroke-width="0.6"/></svg><div class="rj" style="">R+J</div><div class="nm" style="left:45px;">0H7A2329</div></div>
<div class="thumb" style="left:1729.0px"><div class="ph" style=""><svg width="128" height="85" viewBox="0 0 128 85"><defs><linearGradient id="g11" x1="0" y1="0" x2="0" y2="1"><stop offset="0" stop-color="#4f5b72"/><stop offset="0.7" stop-color="#6a768d"/><stop offset="1" stop-color="#8791a6"/></linearGradient></defs><rect width="128" height="85" fill="url(#g11)"/>
<g stroke="#2b2d30" fill="none" stroke-linecap="round"><path d="M4,85 L6,50 L4,20 L8,0" stroke-width="2"/><path d="M10,85 L12,55 L16,20 L14,0" stroke-width="1.5"/><path d="M6,50 L18,35" stroke-width="1"/><path d="M12,60 L20,50" stroke-width="1"/></g>
<g fill="#3b4038" opacity="0.7"><ellipse cx="8" cy="20" rx="8" ry="14"/><ellipse cx="10" cy="55" rx="7" ry="12"/></g>
<g stroke="#232427" fill="none" stroke-linecap="round"><path d="M44,85 L48,41 L44,0" stroke-width="2.2"/><path d="M50,85 L56,33 L62,0" stroke-width="2"/><path d="M40,41 L48,59" stroke-width="1.5"/><path d="M54,50 L50,20" stroke-width="1"/><path d="M57,40 L66,15" stroke-width="1"/><path d="M48,30 L38,10" stroke-width="1"/>
<path d="M63,85 L63,46" stroke-width="3.5" stroke="#34363a"/><path d="M65,46 L76,24" stroke-width="1.5"/><path d="M65,53 L86,57" stroke-width="0.8"/><path d="M22,85 L23,75" stroke-width="2.5"/><path d="M40,85 L39,70" stroke-width="2"/></g>
<ellipse cx="64" cy="46" rx="5" ry="3" fill="#1b1c1e"/><ellipse cx="36" cy="84" rx="5" ry="3" fill="#c8ccd4" opacity="0.6"/></svg></div><svg class="gl" viewBox="0 0 20 20"><circle cx="9.5" cy="9.5" r="8.5" fill="#cfcfcf" stroke="#9a9a9a" stroke-width="1"/><path d="M4 13c2-5 5-8 10-9-2 3-3 6-3 9z" fill="#6a6a6a"/><path d="M13 11h2v3h3v2h-3v3h-2v-3h-3v-2h3z" fill="#f0f0f0" stroke="#333" stroke-width="0.6"/></svg><div class="rj" style="">R+J</div><div class="nm" style="left:45px;">0H7A2330</div></div>
<div class="thumb" style="left:1874.6px"><div class="ph" style=""><svg width="128" height="85" viewBox="0 0 128 85"><defs><linearGradient id="g12" x1="0" y1="0" x2="0" y2="1"><stop offset="0" stop-color="#b8c1d0"/><stop offset="1" stop-color="#97a3b7"/></linearGradient><filter id="bl" x="-100%" y="-100%" width="300%" height="300%"><feGaussianBlur stdDeviation="4"/></filter><filter id="bl2" x="-100%" y="-100%" width="300%" height="300%"><feGaussianBlur stdDeviation="2"/></filter></defs><rect width="128" height="85" fill="url(#g12)"/>
<rect x="-10" y="-10" width="30" height="105" fill="#7f8068" filter="url(#bl2)"/>
<g fill="#9a9a78" opacity="0.8"><circle cx="5" cy="10" r="3"/><circle cx="14" cy="25" r="3"/><circle cx="6" cy="45" r="3"/><circle cx="15" cy="65" r="3"/></g>
<path d="M20,5 L32,10 L38,85 L24,85Z" fill="#4c5258" opacity="0.75" filter="url(#bl)"/>
<ellipse cx="114" cy="28" rx="8" ry="16" fill="#5d6577" opacity="0.6" filter="url(#bl)"/>
<g stroke="#5e5a55" fill="none" stroke-linecap="round"><path d="M44,85 L46,50 L44,20 L48,0" stroke-width="1.8"/><path d="M46,50 L54,20 L57,0" stroke-width="1.3"/><path d="M50,85 L52,40 L58,10" stroke-width="1.1"/><path d="M68,46 L78,18" stroke-width="1.2"/><path d="M68,55 L88,58" stroke-width="0.7"/><path d="M24,85 L25,75" stroke-width="2"/></g>
<path d="M64.5,85 L64.5,46 L68,46 L68,85Z" fill="#dcd5ca"/><ellipse cx="66" cy="46" rx="5" ry="3" fill="#2a2420"/></svg></div><svg class="gl" viewBox="0 0 20 20"><circle cx="9.5" cy="9.5" r="8.5" fill="#cfcfcf" stroke="#9a9a9a" stroke-width="1"/><path d="M4 13c2-5 5-8 10-9-2 3-3 6-3 9z" fill="#6a6a6a"/><path d="M13 11h2v3h3v2h-3v3h-2v-3h-3v-2h3z" fill="#f0f0f0" stroke="#333" stroke-width="0.6"/></svg><div class="rj" style="">R+J</div><div class="nm" style="left:45px;">0H7A2334</div></div>
<div class="thumb" style="left:2020.2px;background:#6b6b6b;border:2px solid #d4923a;box-shadow:none"><div class="ph" style="left:4px;top:25px"><svg width="128" height="85" viewBox="0 0 128 85"><defs><linearGradient id="g13" x1="0" y1="0" x2="0" y2="1"><stop offset="0" stop-color="#c9cdd6"/><stop offset="1" stop-color="#a3b0c3"/></linearGradient></defs><rect width="128" height="85" fill="url(#g13)"/>
<g stroke="#6e6b66" fill="none" stroke-linecap="round"><path d="M14,85 L18,60 L16,30 L20,0" stroke-width="2.6"/><path d="M18,55 L30,20 L34,0" stroke-width="2.2"/><path d="M26,85 L36,50 L44,25 L46,0" stroke-width="1.8"/><path d="M36,50 L42,0" stroke-width="1.3"/><path d="M8,42 L17,60" stroke-width="1.8"/><path d="M30,40 L68,75" stroke-width="0.8"/><path d="M40,62 L78,55" stroke-width="0.8"/><path d="M2,30 L1,50" stroke-width="0.8"/><path d="M50,30 L56,10" stroke-width="0.8"/></g>
<path d="M62.5,85 L62.5,50 L68,50 L67.5,85Z" fill="#d8d2c7"/><path d="M67,50 L81,15" stroke="#d0c9bd" stroke-width="2"/>
<ellipse cx="65" cy="50" rx="7" ry="4" fill="#2e2620"/><path d="M63,47 L65,39 L67,47Z" fill="#2e2620"/>
<path d="M70,58 L88,66" stroke="#6a665f" stroke-width="0.8"/></svg></div><svg class="gl" viewBox="0 0 20 20"><circle cx="9.5" cy="9.5" r="8.5" fill="#cfcfcf" stroke="#9a9a9a" stroke-width="1"/><path d="M4 13c2-5 5-8 10-9-2 3-3 6-3 9z" fill="#6a6a6a"/><path d="M13 11h2v3h3v2h-3v3h-2v-3h-3v-2h3z" fill="#f0f0f0" stroke="#333" stroke-width="0.6"/></svg><div class="rj" style="left:4px;top:167px">R+J</div><div class="nm" style="left:44px;top:166px">0H7A2338</div></div>
</div></div>
<!-- scrollbar -->
<div class="a" style="left:166px;top:1212px;width:1994px;height:23px;background:#f9f9f9"></div>
<div class="a" style="left:1068px;top:1216px;width:1085px;height:14px;background:#c3c3c3;border-radius:7px"></div>
<!-- slider area -->
<div class="a" style="left:166px;top:1235px;width:1994px;height:60px;background:#3e3e3e"></div>
<svg class="a" style="left:176px;top:1250px" width="172" height="30" viewBox="0 0 172 30"><g fill="none" stroke="#bdbdbd" stroke-width="1.8"><circle cx="15" cy="15" r="11.5"/><circle cx="157" cy="15" r="11.5"/></g><path fill="#bdbdbd" d="M9 13.5h12v3H9z M151 13.5h12v3h-12z M155.5 9h3v12h-3z"/><path stroke="#333" stroke-width="1.5" d="M54 15h76M70 9v12M86 9v12M102 9v12M115 9v12M130 9v12"/><rect x="42" y="3" width="13" height="25" rx="6.5" fill="#f4f4f4"/></svg>
<div class="a" style="left:358px;top:1244px;width:48px;height:40px;background:#000;border-radius:5px"></div>
<svg class="a" style="left:364px;top:1250px" width="36" height="30" viewBox="0 0 36 30"><text x="18" y="14" text-anchor="middle" font-family="Liberation Sans" font-size="14.5" fill="#e8e8e8" letter-spacing="-0.5">RAW</text><rect x="4" y="16" width="28" height="13" rx="3" fill="#e8e8e8"/><text x="18" y="27.5" text-anchor="middle" font-family="Liberation Sans" font-size="12" font-weight="bold" fill="#000" letter-spacing="-0.8">JPEG</text></svg>
<div class="a" style="left:413px;top:1244px;width:48px;height:40px;background:#000;border-radius:5px"></div>
<svg class="a" style="left:420px;top:1251px" width="34" height="26" viewBox="0 0 34 26"><g fill="none" stroke="#dcdcdc" stroke-width="1.6"><rect x="1" y="1" width="27" height="20"/><path d="M7 1v20M1 6h6M1 11h6M1 16h6M31 5v19H5"/></g></svg>
<div class="tb" style="left:468px;top:1244px;width:47px;height:40px"></div>
<svg class="a" style="left:479px;top:1252px" width="26" height="26" viewBox="0 0 26 26"><path fill="#d0d0d0" d="M1 1h10v10H1zM15 1h10v10H15zM1 15h10v10H1zM15 15h10v10H15z"/></svg>
<div class="tb" style="left:523px;top:1244px;width:47px;height:40px"></div>
<svg class="a" style="left:533px;top:1252px" width="26" height="26" viewBox="0 0 26 26"><g fill="none" stroke="#bbb" stroke-width="1.3" stroke-dasharray="2 2"><rect x="1" y="1" width="10" height="10"/><rect x="15" y="1" width="10" height="10"/><rect x="1" y="15" width="10" height="10"/><rect x="15" y="15" width="10" height="10"/></g></svg>
<!-- STATUS BAR -->

<div class="t" style="left:22px;top:1330px;font-size:20px;color:#d8d8d8">1 / 46</div>
<div class="tb" style="left:177px;top:1319px;width:135px;height:40px;background:#333;border-radius:3px">
  <div class="blk" style="left:43px;width:46px"></div>
</div>
<svg class="a" style="left:184px;top:1325px" width="122" height="28" viewBox="0 0 122 28"><g fill="#d4d4d4"><path d="M1 2h7v7H1zM10 2h7v7h-7zM19 2h7v7h-7zM1 11h7v7H1zM10 11h7v7h-7zM19 11h7v7h-7zM1 20h7v7H1zM10 20h7v7h-7zM19 20h7v7h-7z"/></g><g fill="#fff"><path d="M46 2h26v14H46zM46 17h26v1H46zM46 20h7v7h-7zM55.5 20h7v7h-7zM65 20h7v7h-7z"/></g><g fill="#d4d4d4"><path d="M92 2h7v7h-7zM92 11h7v7h-7zM92 20h7v7h-7zM101 2h2v25h-2zM105 2h14v25h-14z"/></g></svg>
<!-- check group -->
<div class="tb" style="left:775px;top:1319px;width:166px;height:40px;background:#333;border-radius:3px"></div>
<svg class="a" style="left:775px;top:1319px" width="166" height="40" viewBox="775 1319 166 40"><path d="M783.0,1332 l4,4 l7,-8" fill="none" stroke="#cfcfcf" stroke-width="2"/><text x="795.0" y="1349" font-family="Liberation Sans" font-size="25" fill="#cfcfcf">1</text><path d="M815.2,1332 l4,4 l7,-8" fill="none" stroke="#cfcfcf" stroke-width="2"/><text x="827.2" y="1349" font-family="Liberation Sans" font-size="25" fill="#cfcfcf">2</text><path d="M847.4,1332 l4,4 l7,-8" fill="none" stroke="#cfcfcf" stroke-width="2"/><text x="859.4" y="1349" font-family="Liberation Sans" font-size="25" fill="#cfcfcf">3</text><path d="M879.6,1332 l4,4 l7,-8" fill="none" stroke="#cfcfcf" stroke-width="2"/><text x="891.6" y="1349" font-family="Liberation Sans" font-size="25" fill="#cfcfcf">4</text><path d="M911.8,1332 l4,4 l7,-8" fill="none" stroke="#cfcfcf" stroke-width="2"/><text x="923.8" y="1349" font-family="Liberation Sans" font-size="25" fill="#cfcfcf">5</text></svg>
<div class="tb" style="left:953px;top:1319px;width:167px;height:40px;background:#333;border-radius:3px"></div>
<svg class="a" style="left:953px;top:1319px" width="167" height="40" viewBox="0 0 167 40"><g fill="#d0d0d0"><circle cx="20" cy="20" r="4.5"/><circle cx="52" cy="20" r="4.5"/><circle cx="84" cy="20" r="4.5"/><circle cx="116" cy="20" r="4.5"/><circle cx="148" cy="20" r="4.5"/></g></svg>
<div class="a" style="left:1157px;top:1300px;width:0;height:0;border-left:6.5px solid transparent;border-right:6.5px solid transparent;border-top:8px solid #d0d0d0"></div>
<div class="tb" style="left:1133px;top:1319px;width:84px;height:40px;background:#333;border-radius:3px"><div class="vs" style="left:41px;background:#0f0f0f;width:2px"></div></div>
<svg class="a" style="left:1138px;top:1326px" width="76" height="26" viewBox="0 0 76 26"><g fill="#d0d0d0"><path d="M7 19h12v9H7z" transform="translate(0,-3)"/><path d="M13 5h9v13" fill="none" stroke="#d0d0d0" stroke-width="2"/><path d="M11 3H7v6" fill="none" stroke="#d0d0d0" stroke-width="2.4"/><path d="M3 8h8l-4 5z"/></g><g fill="#d0d0d0" transform="translate(42,0)"><path d="M7 16h12v9H7z"/><path d="M4 18V5h9" fill="none" stroke="#d0d0d0" stroke-width="2"/><path d="M15 3h5v6" fill="none" stroke="#d0d0d0" stroke-width="2.4"/><path d="M16 8h8l-4 5z"/></g></svg>
<div class="tb" style="left:1233px;top:1319px;width:84px;height:40px;background:#333;border-radius:3px"><div class="vs" style="left:41px;background:#0f0f0f;width:2px"></div></div>
<div class="tb" style="left:1317px;top:1319px;width:84px;height:40px;background:#313131;border-color:#2a2a2a;box-shadow:inset 0 1px 0 #4a4a4a;border-radius:3px"><div class="vs" style="left:41px;background:#262626"></div></div>
<svg class="a" style="left:1240px;top:1328px" width="160" height="22" viewBox="0 0 160 22"><g fill="#d0d0d0"><path d="M1 2h3v18H1z M5 11l11-9v6h9v6h-9v6z"/><path d="M47 11l11-9v6h9v6h-9v6z"/></g><g fill="#7a7a7a"><path d="M109 11l-11-9v6h-9v6h9v6z"/><path d="M149 11l-11-9v6h-9v6h9v6z M150 2h3v18h-3z"/></g></svg>
<!-- right panel buttons -->
<div class="tb" style="left:1603px;top:1319px;width:146px;height:40px;background:#333;border-radius:3px"><div class="vs" style="left:47px;background:#0f0f0f;width:2px"></div><div class="vs" style="left:95px;background:#0f0f0f;width:2px"></div></div>
<div class="tb" style="left:1748px;top:1319px;width:49px;height:40px;background:#313131;border-color:#2a2a2a;box-shadow:inset 0 1px 0 #4a4a4a;border-radius:3px"></div>
<svg class="a" style="left:1603px;top:1319px" width="194" height="40" viewBox="0 0 194 40"><g fill="#d0d0d0"><path d="M38 5h8v8z M86 5h8v8z M134 5h8v8z"/></g><g fill="#777"><path d="M182 5h8v8z"/></g>
<g fill="none" stroke="#d0d0d0" stroke-width="1.6"><rect x="8" y="11" width="27" height="22"/><path d="M13 17h7M24 17h5M13 27h5M22 27h8"/><rect x="56" y="11" width="27" height="22"/><rect x="105" y="11" width="27" height="22"/><circle cx="118.5" cy="22" r="5"/><path d="M118.5 18v8M114.5 22h8"/></g>
<g fill="#d0d0d0"><rect x="20" y="13" width="3" height="8"/><rect x="17" y="23" width="3" height="8"/><path d="M57 32l4-8 3-6 3 2 3-8 3 4 3 8 3 4 3 4v0z"/><path d="M108 14h5v3h-2v2h-3zM124 14h5v5h-3v-2h-2zM108 25h3v2h2v3h-5zM126 25h3v5h-5v-3h2z"/></g>
<g fill="#767676"><path d="M160 15l3-4h8l3 4h5a2 2 0 0 1 2 2v15a2 2 0 0 1-2 2h-23a2 2 0 0 1-2-2V17a2 2 0 0 1 2-2z"/></g><circle cx="167" cy="24" r="5" fill="#323232"/></svg>
<div class="t" style="left:2036px;top:1328px;font-size:19.4px;color:#d8d8d8">sRGB / sRGB</div>
<!-- right edge outside window -->


</body></html>
